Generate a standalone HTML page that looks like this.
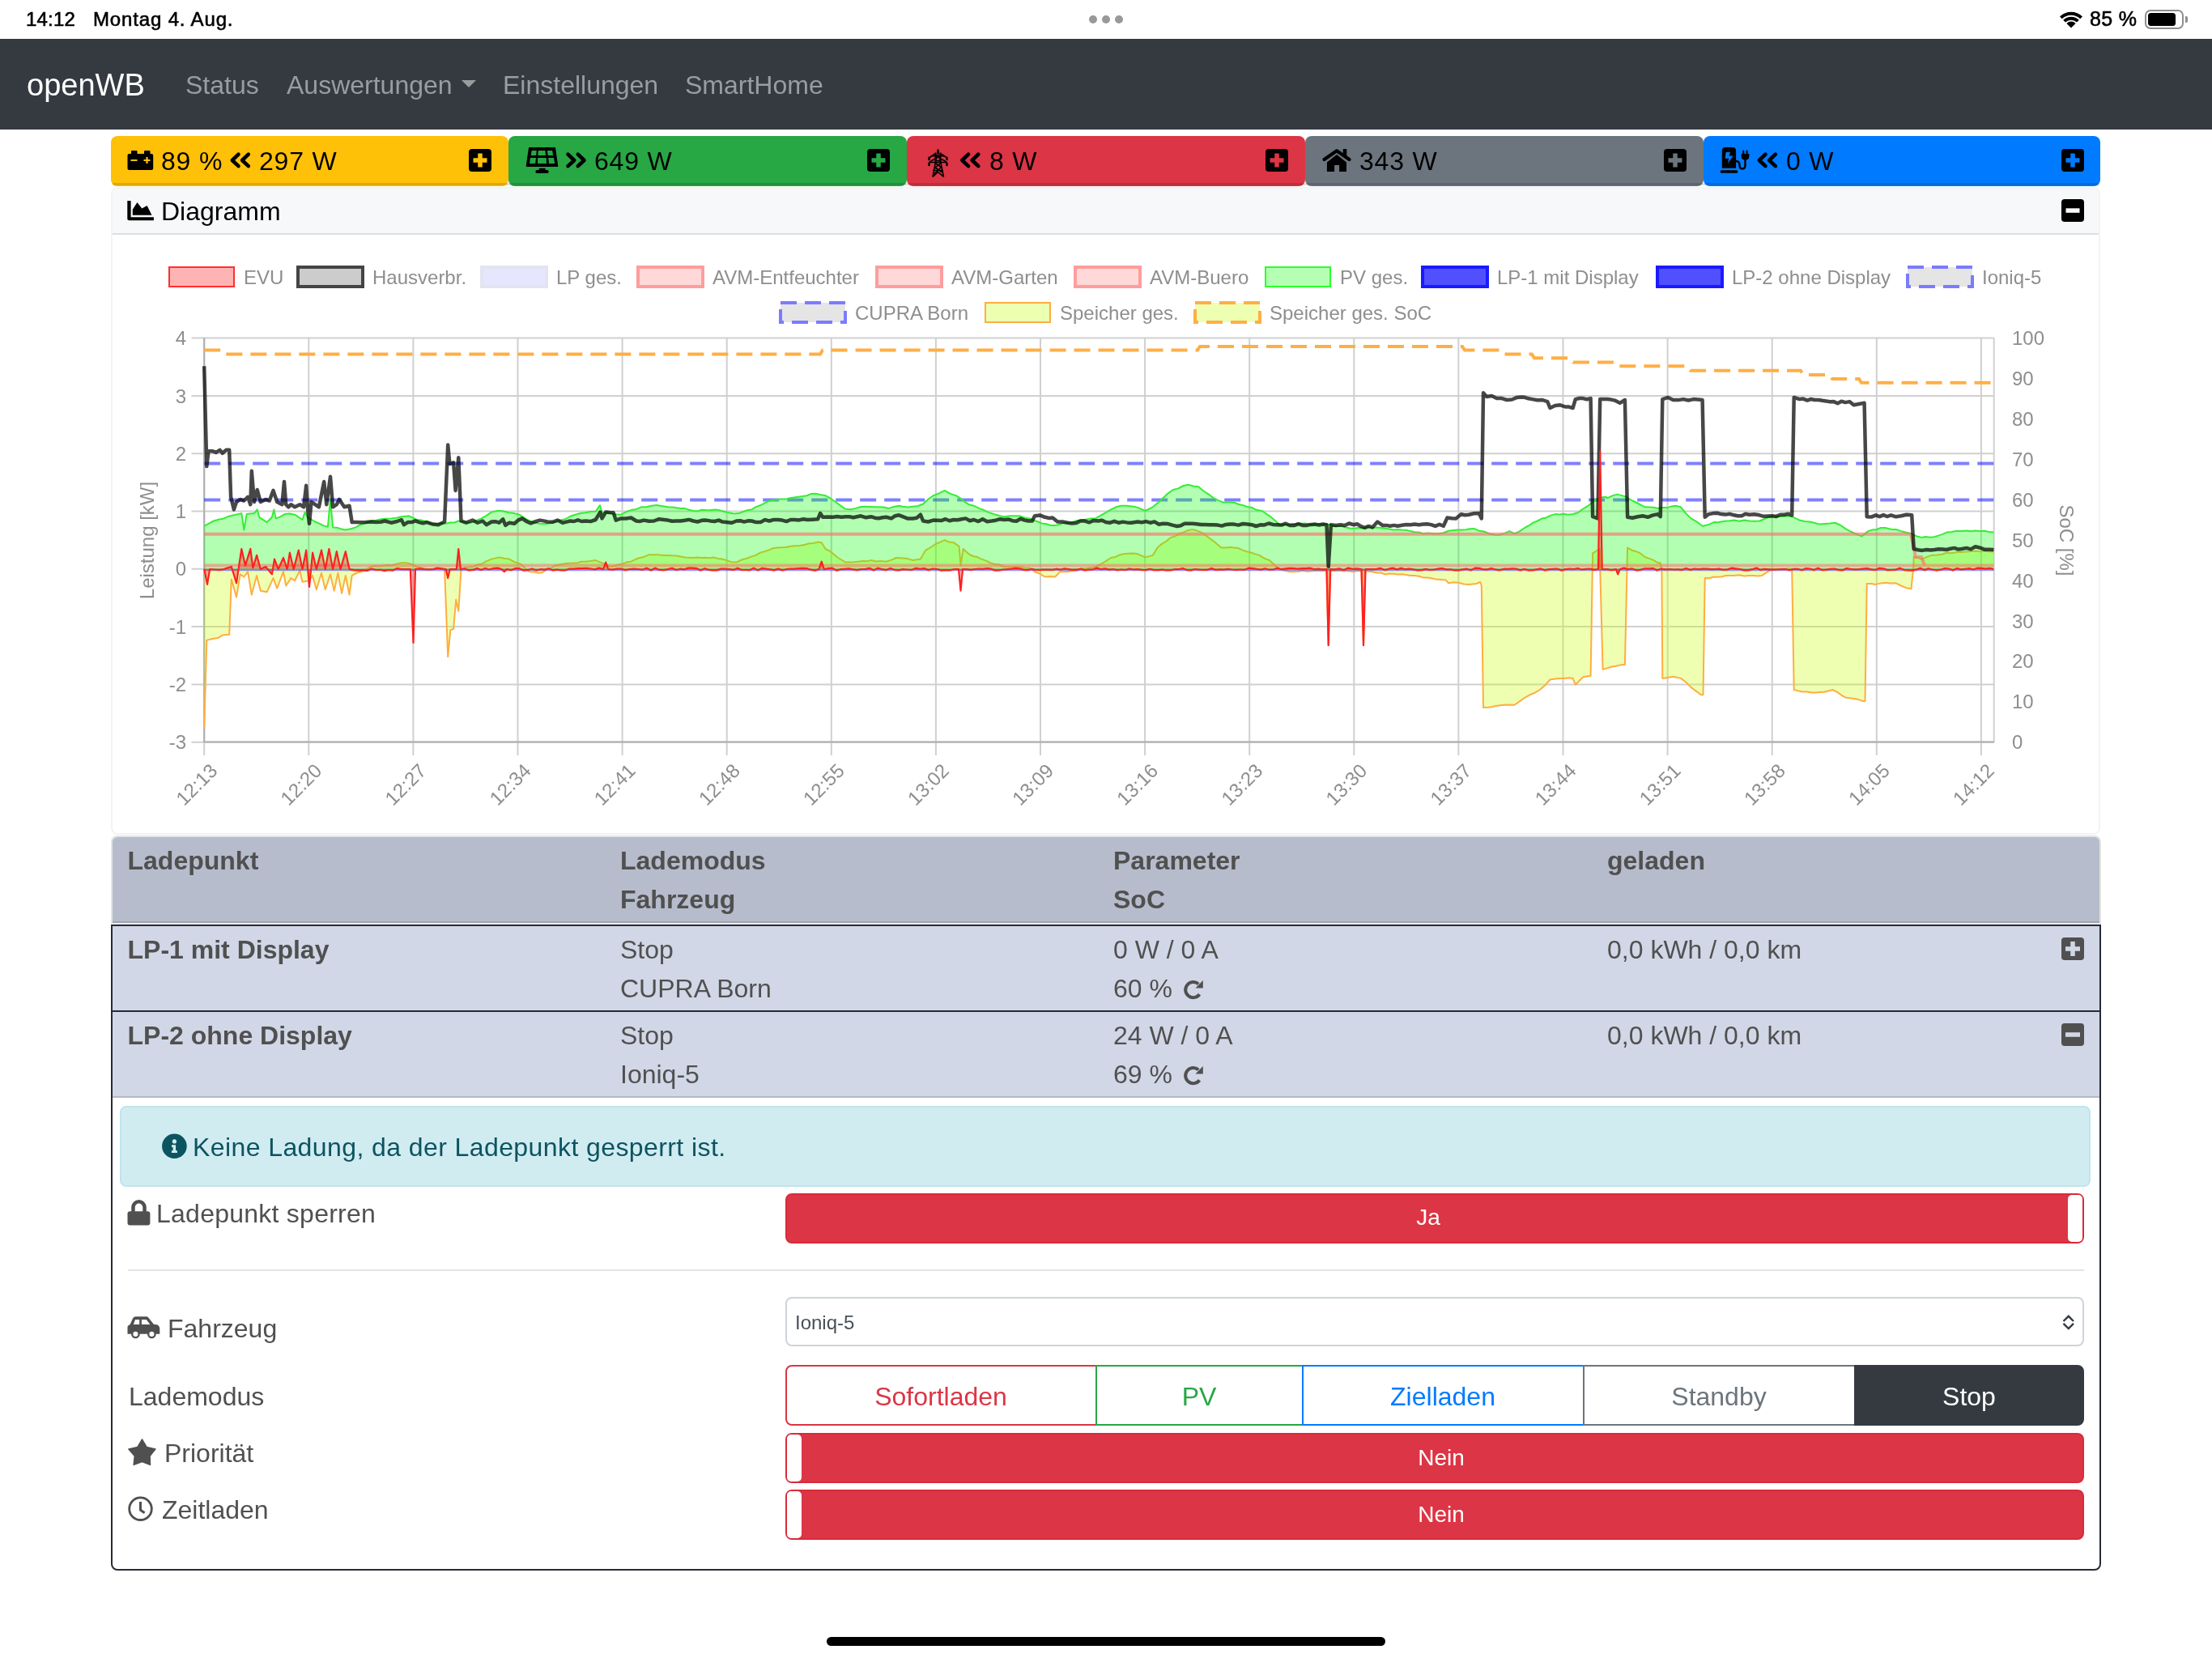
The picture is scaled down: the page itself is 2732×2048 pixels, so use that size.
<!DOCTYPE html>
<html><head><meta charset="utf-8">
<style>
*{box-sizing:border-box;margin:0;padding:0}
html,body{width:2732px;height:2048px;overflow:hidden;background:#fff;font-family:"Liberation Sans",sans-serif;position:relative}
body{will-change:transform}
.a{position:absolute}
.t{position:absolute;white-space:nowrap;line-height:1}
.f32{font-size:32px}
.f24{font-size:24px}
.f28{font-size:28px}
</style></head><body>

<!-- iOS status bar -->
<div class="t f24" style="left:32px;top:12px;color:#000;-webkit-text-stroke:0.6px #000;letter-spacing:0.2px">14:12</div>
<div class="t f24" style="left:115px;top:12px;color:#000;-webkit-text-stroke:0.6px #000;letter-spacing:0.85px">Montag 4. Aug.</div>
<div class="a" style="left:1345px;top:19px;width:10px;height:10px;border-radius:5px;background:#999"></div>
<div class="a" style="left:1361px;top:19px;width:10px;height:10px;border-radius:5px;background:#999"></div>
<div class="a" style="left:1377px;top:19px;width:10px;height:10px;border-radius:5px;background:#999"></div>
<svg class="a" style="left:2543px;top:13px" width="30" height="22" viewBox="0 0 30 22">
 <path d="M1 7.5 A20 20 0 0 1 29 7.5 L26.2 10.3 A16 16 0 0 0 3.8 10.3 Z" fill="#000"/>
 <path d="M5.2 11.7 A14 14 0 0 1 24.8 11.7 L22 14.5 A10 10 0 0 0 8 14.5 Z" fill="#000"/>
 <path d="M9.4 15.9 A8 8 0 0 1 20.6 15.9 L15 21.5 Z" fill="#000"/>
</svg>
<div class="t" style="left:2581px;top:11px;font-size:25px;color:#000;-webkit-text-stroke:0.6px #000;letter-spacing:0.3px">85 %</div>
<div class="a" style="left:2649px;top:12px;width:48px;height:24px;border:2.5px solid #8e8e8e;border-radius:7px"></div>
<div class="a" style="left:2653px;top:16px;width:34px;height:16px;background:#000;border-radius:3.5px"></div>
<div class="a" style="left:2699px;top:20px;width:3px;height:8px;background:#8e8e8e;border-radius:0 2px 2px 0"></div>

<!-- navbar -->
<div class="a" style="left:0;top:48px;width:2732px;height:112px;background:#343a40"></div>
<div class="t" style="left:33px;top:86px;font-size:38px;color:#fff">openWB</div>
<div class="t f32" style="left:229px;top:89px;color:#9a9da0">Status</div>
<div class="t f32" style="left:354px;top:89px;color:#9a9da0">Auswertungen</div>
<div class="a" style="left:570px;top:99px;width:0;height:0;border-left:9px solid transparent;border-right:9px solid transparent;border-top:9px solid #9a9da0"></div>
<div class="t f32" style="left:621px;top:89px;color:#9a9da0">Einstellungen</div>
<div class="t f32" style="left:846px;top:89px;color:#9a9da0">SmartHome</div>

<!-- cards -->
<div class="a" style="left:137px;top:168px;width:491px;height:62px;background:#ffc107;border-radius:8px;"></div>
<div class="a" style="left:628px;top:168px;width:492px;height:62px;background:#28a745;border-radius:8px;"></div>
<div class="a" style="left:1120px;top:168px;width:492px;height:62px;background:#dc3545;border-radius:8px;"></div>
<div class="a" style="left:1612px;top:168px;width:492px;height:62px;background:#6c757d;border-radius:8px;"></div>
<div class="a" style="left:2104px;top:168px;width:490px;height:62px;background:#007bff;border-radius:8px;"></div>
<div class="a" style="left:139px;top:226px;width:2453px;height:2.5px;background:rgba(0,0,0,.13)"></div>
<div class="t f32" style="left:199px;top:183px;color:#000;letter-spacing:0.8px">89 %</div>
<div class="t f32" style="left:320px;top:183px;color:#000;letter-spacing:0.8px">297 W</div>
<div class="t f32" style="left:734px;top:183px;color:#000;letter-spacing:0.8px">649 W</div>
<div class="t f32" style="left:1222px;top:183px;color:#000;letter-spacing:0.8px">8 W</div>
<div class="t f32" style="left:1679px;top:183px;color:#000;letter-spacing:0.8px">343 W</div>
<div class="t f32" style="left:2206px;top:183px;color:#000;letter-spacing:0.8px">0 W</div>
<svg class="a" style="left:0;top:0" width="2732" height="240" viewBox="0 0 2732 240">
 <defs>
  <g id="chl"><path d="M10 2.7 L2.3 10 L10 17.1 M22.3 2.7 L14.6 10 L22.3 17.1" fill="none" stroke="#000" stroke-width="4.6" stroke-linecap="round" stroke-linejoin="round"/></g>
  <g id="chr"><path d="M2.5 2.7 L10.2 10 L2.5 17.1 M14.8 2.7 L22.5 10 L14.8 17.1" fill="none" stroke="#000" stroke-width="4.6" stroke-linecap="round" stroke-linejoin="round"/></g>
 </defs>
 <!-- plus boxes -->
 <rect x="579" y="184" width="28" height="28" rx="4" fill="#000"/><path d="M593 189.5v17M584.5 198h17" stroke="#ffc107" stroke-width="5.5"/>
 <rect x="1071" y="184" width="28" height="28" rx="4" fill="#000"/><path d="M1085 189.5v17M1076.5 198h17" stroke="#28a745" stroke-width="5.5"/>
 <rect x="1563" y="184" width="28" height="28" rx="4" fill="#000"/><path d="M1577 189.5v17M1568.5 198h17" stroke="#dc3545" stroke-width="5.5"/>
 <rect x="2055" y="184" width="28" height="28" rx="4" fill="#000"/><path d="M2069 189.5v17M2060.5 198h17" stroke="#6c757d" stroke-width="5.5"/>
 <rect x="2546" y="184" width="28" height="28" rx="4" fill="#000"/><path d="M2560 189.5v17M2551.5 198h17" stroke="#007bff" stroke-width="5.5"/>
 <!-- battery -->
 <rect x="162" y="186" width="7.5" height="6" rx="1" fill="#000"/>
 <rect x="178" y="186" width="7.5" height="6" rx="1" fill="#000"/>
 <rect x="157.5" y="190" width="31.7" height="20" rx="2" fill="#000"/>
 <path d="M161.5 198h8M177.5 198h8M181.5 194v8" stroke="#ffc107" stroke-width="2.2"/>
 <use href="#chl" x="284.5" y="188"/>
 <!-- solar -->
 <path d="M653.6 182 L685.4 182 Q686 182 686.1 183 L689.3 205 Q689.4 206 688.3 206 L650.7 206 Q649.6 206 649.7 205 L652.9 183 Q653 182 653.6 182Z" fill="#000"/>
 <path d="M656.7 185.9h6.1l-0.6 6.2h-6.5zM664.9 185.9h8.5l0.6 6.2h-9.7zM676 185.9h6.2l0.9 6.2h-6.4zM655 194.9h7l-0.8 7.2h-7.2zM664.1 194.9h10.6l0.3 7.2h-11zM677.3 194.9h6.7l1.2 7.2h-7.2z" fill="#28a745"/>
 <rect x="665.8" y="207.8" width="7.7" height="3" fill="#000"/>
 <rect x="661.5" y="210" width="16" height="4" rx="1.5" fill="#000"/>
 <use href="#chr" x="699" y="188"/>
 <!-- tower -->
 <g fill="none" stroke="#000" stroke-width="1.6" stroke-linejoin="round">
  <path d="M1158.5 184.5 L1152 218.3 M1158.5 184.5 L1165.5 218.3"/>
  <path d="M1155.3 188.5v13M1161.7 188.5v13"/>
  <path d="M1147.5 195.5 Q1152 191 1155.3 190 M1169.5 195.5 Q1165 191 1161.7 190"/>
  <path d="M1147.5 201 Q1150 197.8 1155.3 196.5 M1169.5 201 Q1167 197.8 1161.7 196.5"/>
  <path d="M1148 200.5h21 M1150 192.8h17 M1155.3 194.5h6.4 M1155.3 198.5h6.4"/>
  <path d="M1155.3 201.5 L1162.5 206.5 L1153.5 215 M1161.7 201.5 L1155 207 L1164 213"/>
  <path d="M1152.2 210.5h12.6 M1152 218.3 L1158.5 212.5 L1165.5 218.3"/>
 </g>
 <g fill="#000"><rect x="1146.3" y="193.5" width="2.4" height="4.8" rx="1"/><rect x="1168.3" y="193.5" width="2.4" height="4.8" rx="1"/>
 <rect x="1146.3" y="200.5" width="2.4" height="4.8" rx="1"/><rect x="1168.3" y="200.5" width="2.4" height="4.8" rx="1"/></g>
 <use href="#chl" x="1186" y="188"/>
 <!-- home -->
 <path d="M1635.5 197 L1651 186.3 L1666.5 197" fill="none" stroke="#000" stroke-width="4.2" stroke-linecap="round" stroke-linejoin="round"/>
 <rect x="1658.8" y="184" width="4.5" height="9" fill="#000"/>
 <path d="M1651 191.1 L1663 200.5 V211.9 H1654.1 V203.9 H1648.1 V211.9 H1638.9 V200.5 Z" fill="#000"/>
 <!-- charging station -->
 <path d="M2126.8 207.8 V186.5 Q2126.8 182.1 2131 182.1 H2140 Q2144.1 182.1 2144.1 186.5 V207.8 Z" fill="#000"/>
 <path d="M2131.7 188 H2137 L2135.5 192.5 H2140.6 L2134 202 L2135.2 195.8 H2130.6 Z" fill="#007bff"/>
 <rect x="2124.6" y="210.2" width="21.7" height="3.5" rx="1.5" fill="#000"/>
 <path d="M2144 199 Q2148.5 199 2148.5 204 Q2148.5 208.5 2152 208.5 Q2155.5 208.5 2155.5 204 V196" fill="none" stroke="#000" stroke-width="2.4"/>
 <path d="M2150.6 190 H2160.4 V193 Q2160.4 197.5 2155.5 197.5 Q2150.6 197.5 2150.6 193 Z" fill="#000"/>
 <path d="M2153.3 186.5v4M2157.6 186.5v4" stroke="#000" stroke-width="2" stroke-linecap="round"/>
 <use href="#chl" x="2170.5" y="188"/>
</svg>

<!-- SECTION:CARDS -->

<!-- DIAGRAM_START -->
<div class="a" style="left:137px;top:231px;width:2457px;height:800px;border:2px solid #f2f3f5;border-radius:8px;background:#fff"></div>
<div class="a" style="left:139px;top:233px;width:2453px;height:57px;background:#f7f8fa;border-bottom:2px solid #dcdfe1;border-radius:6px 6px 0 0"></div>
<svg class="a" style="left:157px;top:248px" width="33" height="25" viewBox="0 0 33 25"><path d="M0.3 0 h4.3 v20.3 h28.3 v4 H2.3 Q0.3 24.3 0.3 22.3Z" fill="#000"/><path d="M6.8 17.7 V10.7 L12.5 2 L18.3 9.6 L24.6 6 L30.5 17.7Z" fill="#000"/></svg>
<div class="t f32" style="left:199px;top:245px;color:#000">Diagramm</div>
<svg class="a" style="left:2546px;top:246px" width="28" height="28"><rect width="28" height="28" rx="4" fill="#000"/><rect x="5.5" y="11.3" width="17" height="5.5" fill="#f7f8fa"/></svg>
<svg class="a" style="left:0;top:0" width="2732" height="1040" viewBox="0 0 2732 1040">
<path d="M236.5 417.6H2462.7 M236.5 488.9H2462.7 M236.5 560.2H2462.7 M236.5 631.5H2462.7 M236.5 702.8H2462.7 M236.5 774.1H2462.7 M236.5 845.4H2462.7 M236.5 916.7H2462.7 M252.2 417.6V933 M381.3 417.6V933 M510.4 417.6V933 M639.5 417.6V933 M768.6 417.6V933 M897.7 417.6V933 M1026.8 417.6V933 M1155.9 417.6V933 M1285.0 417.6V933 M1414.1 417.6V933 M1543.2 417.6V933 M1672.3 417.6V933 M1801.4 417.6V933 M1930.5 417.6V933 M2059.6 417.6V933 M2188.7 417.6V933 M2317.8 417.6V933 M2446.9 417.6V933 M2462.7 417.6V917.5" stroke="#d0d0d0" stroke-width="2" fill="none"/>
<path d="M252.2 417.6V917.5 M252.2 916.5H2462.7" stroke="#adadad" stroke-width="2" fill="none"/>
<g font-family="Liberation Sans" font-size="24" fill="#8e8e8e"><text x="230" y="426.2" text-anchor="end">4</text><text x="230" y="497.5" text-anchor="end">3</text><text x="230" y="568.8" text-anchor="end">2</text><text x="230" y="640.1" text-anchor="end">1</text><text x="230" y="711.4" text-anchor="end">0</text><text x="230" y="782.7" text-anchor="end">-1</text><text x="230" y="854.0" text-anchor="end">-2</text><text x="230" y="925.3" text-anchor="end">-3</text><text x="2485" y="426.2">100</text><text x="2485" y="476.1">90</text><text x="2485" y="526.0">80</text><text x="2485" y="575.9">70</text><text x="2485" y="625.8">60</text><text x="2485" y="675.7">50</text><text x="2485" y="725.6">40</text><text x="2485" y="775.5">30</text><text x="2485" y="825.4">20</text><text x="2485" y="875.3">10</text><text x="2485" y="925.2">0</text><text transform="translate(264.2 948) rotate(-45)" text-anchor="end" x="0" y="8">12:13</text><text transform="translate(393.3 948) rotate(-45)" text-anchor="end" x="0" y="8">12:20</text><text transform="translate(522.4 948) rotate(-45)" text-anchor="end" x="0" y="8">12:27</text><text transform="translate(651.5 948) rotate(-45)" text-anchor="end" x="0" y="8">12:34</text><text transform="translate(780.6 948) rotate(-45)" text-anchor="end" x="0" y="8">12:41</text><text transform="translate(909.7 948) rotate(-45)" text-anchor="end" x="0" y="8">12:48</text><text transform="translate(1038.8 948) rotate(-45)" text-anchor="end" x="0" y="8">12:55</text><text transform="translate(1167.9 948) rotate(-45)" text-anchor="end" x="0" y="8">13:02</text><text transform="translate(1297.0 948) rotate(-45)" text-anchor="end" x="0" y="8">13:09</text><text transform="translate(1426.1 948) rotate(-45)" text-anchor="end" x="0" y="8">13:16</text><text transform="translate(1555.2 948) rotate(-45)" text-anchor="end" x="0" y="8">13:23</text><text transform="translate(1684.3 948) rotate(-45)" text-anchor="end" x="0" y="8">13:30</text><text transform="translate(1813.4 948) rotate(-45)" text-anchor="end" x="0" y="8">13:37</text><text transform="translate(1942.5 948) rotate(-45)" text-anchor="end" x="0" y="8">13:44</text><text transform="translate(2071.6 948) rotate(-45)" text-anchor="end" x="0" y="8">13:51</text><text transform="translate(2200.7 948) rotate(-45)" text-anchor="end" x="0" y="8">13:58</text><text transform="translate(2329.8 948) rotate(-45)" text-anchor="end" x="0" y="8">14:05</text><text transform="translate(2458.9 948) rotate(-45)" text-anchor="end" x="0" y="8">14:12</text><text transform="translate(190 667.5) rotate(-90)" text-anchor="middle">Leistung [kW]</text><text transform="translate(2544 667.5) rotate(90)" text-anchor="middle">SoC [%]</text></g>
<path d="M252.2 432.6 L273.0 432.6 L276.0 437.6 L1013.0 437.6 L1016.0 432.6 L1479.0 432.6 L1482.0 427.9 L1806.0 427.9 L1809.0 432.6 L1852.0 432.6 L1855.0 437.6 L1892.0 437.6 L1895.0 442.3 L1940.0 442.3 L1943.0 447.6 L1995.0 447.6 L1998.0 452.3 L2085.0 452.3 L2088.0 457.8 L2224.0 457.8 L2227.0 463.0 L2260.0 463.0 L2263.0 468.0 L2296.0 468.0 L2299.0 472.8 L2462.5 472.8" stroke="#ffae45" stroke-width="4" fill="none" stroke-dasharray="20 10"/>
<path d="M252.2 702.8 L252.2 899.0 L255.3 790.9 L262.7 789.0 L270.1 787.7 L274.8 784.6 L283.2 783.7 L285.8 715.6 L292.0 737.6 L296.7 709.4 L301.4 712.5 L306.1 706.2 L310.8 734.5 L317.1 710.9 L321.8 729.7 L329.6 731.3 L337.5 714.1 L342.2 726.6 L350.0 706.2 L353.2 723.5 L359.4 714.1 L364.1 717.2 L370.4 704.7 L373.5 718.8 L382.0 717.2 L386.1 710.9 L390.8 728.2 L397.0 707.8 L401.7 728.2 L408.0 709.4 L412.7 729.7 L417.4 707.8 L422.1 732.9 L426.8 710.9 L431.5 734.5 L434.7 710.9 L440.1 708.0 L445.6 706.2 L451.9 703.4 L458.2 700.0 L463.2 698.9 L468.2 699.4 L473.2 698.8 L478.2 697.9 L483.2 698.4 L489.5 696.8 L495.8 695.3 L502.1 695.2 L508.3 696.8 L514.6 700.0 L520.9 701.4 L527.1 703.1 L535.0 703.1 L542.1 702.3 L549.1 703.1 L553.2 811.3 L556.3 778.3 L560.1 776.8 L563.2 740.7 L566.3 754.8 L569.5 703.1 L574.5 701.1 L579.5 700.5 L584.5 699.9 L589.5 697.4 L594.6 696.8 L600.8 693.2 L607.1 690.6 L616.5 688.4 L622.8 689.7 L629.0 690.6 L636.1 694.5 L643.2 696.8 L648.6 701.7 L654.1 706.2 L659.3 706.4 L664.6 707.7 L669.8 707.2 L675.0 703.4 L680.2 702.0 L685.5 698.4 L690.8 697.4 L696.2 696.4 L701.6 695.7 L707.0 695.4 L712.3 695.6 L717.7 693.8 L723.1 693.7 L729.4 693.1 L735.6 692.1 L745.0 695.9 L754.4 700.0 L759.5 699.0 L764.5 697.2 L769.5 696.3 L774.5 694.2 L779.5 693.7 L785.0 690.8 L790.5 688.9 L796.0 687.7 L801.5 685.2 L807.3 685.3 L813.2 685.2 L819.1 685.9 L825.0 685.9 L830.2 686.3 L835.4 686.5 L840.7 687.4 L845.9 688.5 L851.1 688.8 L856.3 689.0 L861.4 688.4 L866.4 688.9 L871.4 688.7 L876.4 689.2 L881.4 688.4 L886.7 690.0 L891.9 690.5 L897.1 692.1 L903.4 694.2 L909.6 694.6 L915.9 691.5 L922.2 689.7 L928.4 687.4 L933.7 685.8 L938.9 682.6 L944.1 681.2 L949.3 679.6 L954.6 677.2 L959.8 676.5 L965.0 676.2 L970.2 675.9 L975.5 674.9 L981.7 674.3 L988.0 674.1 L994.3 672.7 L999.5 671.3 L1004.7 671.0 L1010.0 669.6 L1014.7 670.2 L1019.4 678.0 L1025.6 681.2 L1035.0 689.0 L1044.4 694.6 L1049.7 694.5 L1054.9 694.2 L1060.1 693.7 L1065.3 693.1 L1070.6 693.3 L1075.8 692.1 L1082.1 693.5 L1088.3 693.1 L1094.6 693.7 L1100.9 691.6 L1107.1 689.0 L1115.0 689.6 L1121.3 690.1 L1127.5 692.1 L1136.9 690.6 L1143.2 679.6 L1149.5 676.0 L1155.8 671.8 L1161.2 669.7 L1166.7 667.1 L1172.2 669.5 L1177.7 670.2 L1184.6 674.9 L1186.5 698.4 L1189.6 678.0 L1196.5 684.3 L1201.7 687.0 L1207.0 688.1 L1212.2 690.6 L1217.4 692.4 L1222.6 695.0 L1227.9 696.8 L1234.1 697.5 L1240.4 700.0 L1245.6 700.2 L1250.8 699.9 L1256.1 700.1 L1261.3 700.2 L1266.5 701.8 L1271.7 701.5 L1278.0 706.2 L1284.3 708.7 L1290.5 712.5 L1296.8 712.1 L1303.1 712.5 L1309.4 706.2 L1318.8 706.2 L1324.5 705.0 L1330.3 704.8 L1336.0 702.3 L1341.8 702.0 L1347.5 701.1 L1353.2 700.0 L1359.5 697.0 L1365.8 693.2 L1372.1 689.0 L1377.3 688.1 L1382.5 685.5 L1387.7 684.3 L1394.0 683.7 L1400.3 683.4 L1405.0 684.3 L1414.4 688.4 L1423.8 685.9 L1430.1 675.8 L1435.3 671.6 L1440.5 668.6 L1445.8 663.9 L1451.0 662.7 L1456.2 659.1 L1461.4 657.6 L1466.9 655.2 L1472.4 653.9 L1477.9 655.3 L1483.4 657.6 L1488.6 660.8 L1493.8 664.9 L1499.0 668.6 L1508.4 676.5 L1513.7 676.6 L1518.9 676.0 L1524.1 676.5 L1529.3 677.1 L1534.6 679.4 L1539.8 681.2 L1545.0 682.5 L1550.2 684.4 L1555.5 685.9 L1561.7 689.8 L1568.0 692.1 L1574.3 698.0 L1580.5 703.1 L1586.8 704.7 L1593.1 706.2 L1598.3 706.2 L1603.5 706.0 L1608.8 704.7 L1614.0 705.9 L1619.2 705.4 L1624.4 704.7 L1631.5 705.3 L1638.5 704.7 L1640.7 797.1 L1642.9 704.7 L1649.4 705.2 L1655.8 704.7 L1661.0 705.0 L1666.2 705.5 L1671.5 706.2 L1676.5 705.1 L1681.5 705.3 L1684.0 797.1 L1686.2 705.3 L1695.0 706.2 L1700.2 707.5 L1705.4 707.5 L1710.7 709.4 L1715.9 708.6 L1721.1 708.8 L1726.3 709.4 L1731.6 709.3 L1736.8 710.1 L1742.0 710.9 L1747.2 711.0 L1752.5 711.7 L1757.7 713.4 L1762.9 713.6 L1768.1 714.2 L1773.4 715.6 L1779.6 715.9 L1785.9 716.6 L1789.0 720.3 L1795.3 719.2 L1801.6 719.7 L1807.9 721.5 L1814.1 721.9 L1823.5 721.0 L1828.2 718.8 L1829.8 723.5 L1832.0 873.9 L1837.2 873.8 L1842.3 873.3 L1847.6 871.9 L1852.8 871.2 L1858.0 870.8 L1864.3 870.5 L1870.5 870.8 L1876.8 866.4 L1883.1 861.8 L1889.4 858.3 L1895.6 855.8 L1901.9 852.0 L1908.2 846.6 L1914.4 839.5 L1920.7 838.6 L1927.0 837.9 L1932.2 837.9 L1937.4 837.2 L1942.6 837.9 L1945.8 845.7 L1955.2 836.3 L1964.6 834.8 L1967.1 683.4 L1975.6 678.0 L1979.6 826.9 L1985.0 825.4 L1990.5 823.5 L1996.0 822.7 L2001.5 821.4 L2006.9 820.7 L2009.5 703.1 L2010.1 676.5 L2015.5 679.7 L2020.8 681.2 L2026.2 683.7 L2031.6 688.0 L2036.9 689.9 L2042.3 691.9 L2047.7 695.3 L2050.8 695.3 L2052.4 704.7 L2053.3 837.9 L2059.9 836.9 L2066.5 835.7 L2075.9 837.9 L2082.2 842.5 L2088.4 848.9 L2094.7 853.6 L2101.0 858.3 L2103.5 858.3 L2105.7 714.1 L2111.2 714.2 L2116.7 712.5 L2121.7 712.8 L2126.7 712.2 L2131.7 711.1 L2136.7 711.0 L2141.7 710.9 L2148.0 710.3 L2154.3 711.4 L2160.5 710.9 L2165.8 711.0 L2171.0 711.4 L2176.2 710.9 L2185.6 704.7 L2188.8 703.1 L2194.4 702.8 L2200.0 703.1 L2206.6 702.6 L2213.2 703.1 L2215.7 852.0 L2221.2 853.4 L2226.6 854.6 L2232.0 854.5 L2237.2 855.4 L2242.5 855.5 L2247.7 855.1 L2252.9 854.7 L2258.1 853.5 L2263.4 852.0 L2268.6 854.6 L2273.8 858.3 L2279.0 861.4 L2284.5 862.3 L2290.0 862.9 L2295.5 864.1 L2301.0 866.1 L2303.5 866.1 L2305.7 721.0 L2311.2 721.0 L2316.7 721.9 L2322.9 720.4 L2329.2 719.7 L2335.5 720.4 L2341.7 720.3 L2348.0 723.5 L2354.3 726.2 L2360.5 727.2 L2363.1 703.1 L2363.7 687.4 L2373.1 690.6 L2379.4 688.1 L2385.6 685.9 L2391.9 685.6 L2398.2 684.7 L2404.4 682.7 L2410.7 683.3 L2417.0 682.1 L2423.2 682.1 L2428.7 681.4 L2434.2 681.1 L2439.7 680.8 L2445.2 681.2 L2450.9 680.6 L2456.7 681.4 L2462.4 681.2 L2462.4 702.8 Z" fill="rgba(200,255,0,0.3)" stroke="none"/>
<path d="M252.2 899.0 L255.3 790.9 L262.7 789.0 L270.1 787.7 L274.8 784.6 L283.2 783.7 L285.8 715.6 L292.0 737.6 L296.7 709.4 L301.4 712.5 L306.1 706.2 L310.8 734.5 L317.1 710.9 L321.8 729.7 L329.6 731.3 L337.5 714.1 L342.2 726.6 L350.0 706.2 L353.2 723.5 L359.4 714.1 L364.1 717.2 L370.4 704.7 L373.5 718.8 L382.0 717.2 L386.1 710.9 L390.8 728.2 L397.0 707.8 L401.7 728.2 L408.0 709.4 L412.7 729.7 L417.4 707.8 L422.1 732.9 L426.8 710.9 L431.5 734.5 L434.7 710.9 L440.1 708.0 L445.6 706.2 L451.9 703.4 L458.2 700.0 L463.2 698.9 L468.2 699.4 L473.2 698.8 L478.2 697.9 L483.2 698.4 L489.5 696.8 L495.8 695.3 L502.1 695.2 L508.3 696.8 L514.6 700.0 L520.9 701.4 L527.1 703.1 L535.0 703.1 L542.1 702.3 L549.1 703.1 L553.2 811.3 L556.3 778.3 L560.1 776.8 L563.2 740.7 L566.3 754.8 L569.5 703.1 L574.5 701.1 L579.5 700.5 L584.5 699.9 L589.5 697.4 L594.6 696.8 L600.8 693.2 L607.1 690.6 L616.5 688.4 L622.8 689.7 L629.0 690.6 L636.1 694.5 L643.2 696.8 L648.6 701.7 L654.1 706.2 L659.3 706.4 L664.6 707.7 L669.8 707.2 L675.0 703.4 L680.2 702.0 L685.5 698.4 L690.8 697.4 L696.2 696.4 L701.6 695.7 L707.0 695.4 L712.3 695.6 L717.7 693.8 L723.1 693.7 L729.4 693.1 L735.6 692.1 L745.0 695.9 L754.4 700.0 L759.5 699.0 L764.5 697.2 L769.5 696.3 L774.5 694.2 L779.5 693.7 L785.0 690.8 L790.5 688.9 L796.0 687.7 L801.5 685.2 L807.3 685.3 L813.2 685.2 L819.1 685.9 L825.0 685.9 L830.2 686.3 L835.4 686.5 L840.7 687.4 L845.9 688.5 L851.1 688.8 L856.3 689.0 L861.4 688.4 L866.4 688.9 L871.4 688.7 L876.4 689.2 L881.4 688.4 L886.7 690.0 L891.9 690.5 L897.1 692.1 L903.4 694.2 L909.6 694.6 L915.9 691.5 L922.2 689.7 L928.4 687.4 L933.7 685.8 L938.9 682.6 L944.1 681.2 L949.3 679.6 L954.6 677.2 L959.8 676.5 L965.0 676.2 L970.2 675.9 L975.5 674.9 L981.7 674.3 L988.0 674.1 L994.3 672.7 L999.5 671.3 L1004.7 671.0 L1010.0 669.6 L1014.7 670.2 L1019.4 678.0 L1025.6 681.2 L1035.0 689.0 L1044.4 694.6 L1049.7 694.5 L1054.9 694.2 L1060.1 693.7 L1065.3 693.1 L1070.6 693.3 L1075.8 692.1 L1082.1 693.5 L1088.3 693.1 L1094.6 693.7 L1100.9 691.6 L1107.1 689.0 L1115.0 689.6 L1121.3 690.1 L1127.5 692.1 L1136.9 690.6 L1143.2 679.6 L1149.5 676.0 L1155.8 671.8 L1161.2 669.7 L1166.7 667.1 L1172.2 669.5 L1177.7 670.2 L1184.6 674.9 L1186.5 698.4 L1189.6 678.0 L1196.5 684.3 L1201.7 687.0 L1207.0 688.1 L1212.2 690.6 L1217.4 692.4 L1222.6 695.0 L1227.9 696.8 L1234.1 697.5 L1240.4 700.0 L1245.6 700.2 L1250.8 699.9 L1256.1 700.1 L1261.3 700.2 L1266.5 701.8 L1271.7 701.5 L1278.0 706.2 L1284.3 708.7 L1290.5 712.5 L1296.8 712.1 L1303.1 712.5 L1309.4 706.2 L1318.8 706.2 L1324.5 705.0 L1330.3 704.8 L1336.0 702.3 L1341.8 702.0 L1347.5 701.1 L1353.2 700.0 L1359.5 697.0 L1365.8 693.2 L1372.1 689.0 L1377.3 688.1 L1382.5 685.5 L1387.7 684.3 L1394.0 683.7 L1400.3 683.4 L1405.0 684.3 L1414.4 688.4 L1423.8 685.9 L1430.1 675.8 L1435.3 671.6 L1440.5 668.6 L1445.8 663.9 L1451.0 662.7 L1456.2 659.1 L1461.4 657.6 L1466.9 655.2 L1472.4 653.9 L1477.9 655.3 L1483.4 657.6 L1488.6 660.8 L1493.8 664.9 L1499.0 668.6 L1508.4 676.5 L1513.7 676.6 L1518.9 676.0 L1524.1 676.5 L1529.3 677.1 L1534.6 679.4 L1539.8 681.2 L1545.0 682.5 L1550.2 684.4 L1555.5 685.9 L1561.7 689.8 L1568.0 692.1 L1574.3 698.0 L1580.5 703.1 L1586.8 704.7 L1593.1 706.2 L1598.3 706.2 L1603.5 706.0 L1608.8 704.7 L1614.0 705.9 L1619.2 705.4 L1624.4 704.7 L1631.5 705.3 L1638.5 704.7 L1640.7 797.1 L1642.9 704.7 L1649.4 705.2 L1655.8 704.7 L1661.0 705.0 L1666.2 705.5 L1671.5 706.2 L1676.5 705.1 L1681.5 705.3 L1684.0 797.1 L1686.2 705.3 L1695.0 706.2 L1700.2 707.5 L1705.4 707.5 L1710.7 709.4 L1715.9 708.6 L1721.1 708.8 L1726.3 709.4 L1731.6 709.3 L1736.8 710.1 L1742.0 710.9 L1747.2 711.0 L1752.5 711.7 L1757.7 713.4 L1762.9 713.6 L1768.1 714.2 L1773.4 715.6 L1779.6 715.9 L1785.9 716.6 L1789.0 720.3 L1795.3 719.2 L1801.6 719.7 L1807.9 721.5 L1814.1 721.9 L1823.5 721.0 L1828.2 718.8 L1829.8 723.5 L1832.0 873.9 L1837.2 873.8 L1842.3 873.3 L1847.6 871.9 L1852.8 871.2 L1858.0 870.8 L1864.3 870.5 L1870.5 870.8 L1876.8 866.4 L1883.1 861.8 L1889.4 858.3 L1895.6 855.8 L1901.9 852.0 L1908.2 846.6 L1914.4 839.5 L1920.7 838.6 L1927.0 837.9 L1932.2 837.9 L1937.4 837.2 L1942.6 837.9 L1945.8 845.7 L1955.2 836.3 L1964.6 834.8 L1967.1 683.4 L1975.6 678.0 L1979.6 826.9 L1985.0 825.4 L1990.5 823.5 L1996.0 822.7 L2001.5 821.4 L2006.9 820.7 L2009.5 703.1 L2010.1 676.5 L2015.5 679.7 L2020.8 681.2 L2026.2 683.7 L2031.6 688.0 L2036.9 689.9 L2042.3 691.9 L2047.7 695.3 L2050.8 695.3 L2052.4 704.7 L2053.3 837.9 L2059.9 836.9 L2066.5 835.7 L2075.9 837.9 L2082.2 842.5 L2088.4 848.9 L2094.7 853.6 L2101.0 858.3 L2103.5 858.3 L2105.7 714.1 L2111.2 714.2 L2116.7 712.5 L2121.7 712.8 L2126.7 712.2 L2131.7 711.1 L2136.7 711.0 L2141.7 710.9 L2148.0 710.3 L2154.3 711.4 L2160.5 710.9 L2165.8 711.0 L2171.0 711.4 L2176.2 710.9 L2185.6 704.7 L2188.8 703.1 L2194.4 702.8 L2200.0 703.1 L2206.6 702.6 L2213.2 703.1 L2215.7 852.0 L2221.2 853.4 L2226.6 854.6 L2232.0 854.5 L2237.2 855.4 L2242.5 855.5 L2247.7 855.1 L2252.9 854.7 L2258.1 853.5 L2263.4 852.0 L2268.6 854.6 L2273.8 858.3 L2279.0 861.4 L2284.5 862.3 L2290.0 862.9 L2295.5 864.1 L2301.0 866.1 L2303.5 866.1 L2305.7 721.0 L2311.2 721.0 L2316.7 721.9 L2322.9 720.4 L2329.2 719.7 L2335.5 720.4 L2341.7 720.3 L2348.0 723.5 L2354.3 726.2 L2360.5 727.2 L2363.1 703.1 L2363.7 687.4 L2373.1 690.6 L2379.4 688.1 L2385.6 685.9 L2391.9 685.6 L2398.2 684.7 L2404.4 682.7 L2410.7 683.3 L2417.0 682.1 L2423.2 682.1 L2428.7 681.4 L2434.2 681.1 L2439.7 680.8 L2445.2 681.2 L2450.9 680.6 L2456.7 681.4 L2462.4 681.2" fill="none" stroke="#ffae3f" stroke-width="2" stroke-linejoin="round"/>
<path d="M252.2 572.5H2462.5 M252.2 617.6H2462.5" stroke="rgba(0,0,255,0.5)" stroke-width="4" stroke-dasharray="20 10" fill="none"/>
<path d="M252.2 704H2462.5" stroke="rgba(60,60,255,0.55)" stroke-width="2.5" fill="none"/>
<path d="M252.2 702.8 L252.2 649.8 L258.0 646.6 L263.8 643.5 L270.1 641.7 L276.3 640.4 L282.6 637.7 L288.9 636.3 L298.3 634.1 L301.4 654.5 L304.6 635.1 L314.0 634.1 L317.7 629.4 L320.2 638.8 L329.6 645.1 L335.9 638.8 L338.4 629.4 L340.6 640.4 L346.1 638.4 L351.6 635.1 L357.9 634.5 L364.1 635.7 L373.5 642.0 L376.7 632.6 L379.8 638.8 L389.2 644.5 L394.4 646.6 L399.6 649.4 L404.9 650.8 L408.0 616.9 L411.1 651.4 L416.4 651.7 L421.6 653.6 L426.8 654.5 L433.1 653.2 L439.4 651.4 L445.6 647.9 L451.9 645.9 L458.2 643.5 L464.4 642.8 L470.7 641.3 L477.0 640.8 L483.2 640.4 L489.5 639.7 L495.8 638.2 L505.2 637.3 L514.6 642.0 L520.9 642.6 L527.1 644.5 L535.0 647.6 L540.2 646.8 L545.4 646.3 L550.7 646.7 L555.9 645.6 L561.1 645.4 L566.3 643.5 L571.6 644.4 L576.8 645.5 L582.0 645.7 L588.3 642.9 L594.6 640.4 L600.8 636.9 L607.1 632.6 L613.4 631.1 L619.6 631.0 L629.0 633.2 L635.3 634.1 L641.6 635.7 L651.0 642.0 L660.4 645.7 L666.7 646.8 L672.9 647.3 L679.2 646.3 L685.5 644.5 L691.7 642.8 L698.0 641.3 L704.3 637.8 L710.5 635.7 L716.8 634.0 L723.1 633.2 L729.4 632.0 L735.6 631.9 L741.0 624.1 L743.5 633.2 L748.9 633.3 L754.4 634.1 L760.7 635.5 L767.0 635.7 L773.2 632.3 L779.5 630.1 L785.8 628.9 L792.1 626.3 L798.3 626.2 L804.6 624.7 L810.9 624.1 L817.1 625.0 L825.0 626.3 L830.2 626.6 L835.4 627.3 L840.7 627.9 L845.9 628.1 L851.1 629.8 L856.3 631.0 L861.6 631.4 L866.8 629.7 L872.0 630.1 L877.2 630.2 L882.5 629.4 L887.7 630.1 L894.0 631.8 L900.2 633.2 L906.5 634.4 L912.8 634.1 L918.0 632.0 L923.2 630.1 L928.4 629.4 L933.7 626.1 L938.9 624.3 L944.1 621.6 L949.3 619.2 L954.6 617.7 L959.8 616.9 L965.0 616.4 L970.2 616.6 L975.5 615.3 L980.7 614.5 L985.9 613.7 L991.1 613.1 L996.4 612.2 L1001.6 610.1 L1006.8 609.7 L1013.1 611.1 L1019.4 612.2 L1025.6 615.5 L1031.9 620.0 L1038.2 624.6 L1044.4 628.8 L1050.7 629.2 L1057.0 627.9 L1063.2 626.0 L1069.5 625.7 L1074.7 626.0 L1080.0 626.3 L1085.2 626.3 L1091.5 626.5 L1097.7 627.9 L1104.0 625.9 L1110.3 624.7 L1115.0 625.7 L1121.3 626.6 L1127.5 625.7 L1133.8 625.0 L1140.1 622.5 L1146.3 616.7 L1152.6 612.2 L1159.7 609.4 L1166.7 605.9 L1173.8 609.9 L1180.8 612.2 L1186.1 615.4 L1191.3 619.7 L1196.5 623.2 L1202.8 624.7 L1209.0 627.9 L1214.3 629.7 L1219.5 632.4 L1224.7 634.1 L1229.9 635.7 L1235.2 637.3 L1240.4 638.2 L1246.7 637.2 L1252.9 637.3 L1259.2 637.3 L1265.5 639.5 L1271.7 640.4 L1277.0 642.6 L1282.2 644.5 L1287.4 646.7 L1292.6 647.2 L1297.9 649.0 L1303.1 648.9 L1308.3 648.0 L1313.5 645.9 L1318.8 645.7 L1324.0 645.2 L1329.2 643.3 L1334.4 642.6 L1340.7 641.8 L1347.0 640.6 L1353.2 640.4 L1359.5 636.7 L1365.8 633.2 L1372.1 629.4 L1378.3 626.3 L1384.6 624.8 L1390.9 624.7 L1400.3 625.7 L1405.0 626.9 L1414.4 631.0 L1423.8 626.3 L1430.1 621.0 L1436.3 615.3 L1442.6 609.4 L1448.9 605.0 L1455.2 603.4 L1461.4 600.0 L1467.7 598.7 L1474.0 600.5 L1480.2 601.2 L1486.5 606.5 L1492.8 610.6 L1499.0 615.3 L1505.3 618.4 L1511.6 620.7 L1517.9 620.2 L1524.1 620.7 L1529.3 622.8 L1534.6 623.9 L1539.8 625.7 L1546.1 627.0 L1552.3 630.1 L1558.6 631.0 L1568.0 637.3 L1574.3 642.6 L1580.5 648.2 L1585.6 647.7 L1590.6 648.3 L1595.6 647.1 L1600.6 647.3 L1605.6 646.7 L1611.9 646.4 L1618.2 647.9 L1624.4 647.6 L1630.7 647.4 L1637.0 647.2 L1643.2 648.2 L1649.5 650.1 L1655.8 649.7 L1662.1 651.4 L1667.3 652.4 L1672.5 652.7 L1677.7 652.0 L1683.5 652.2 L1689.2 651.1 L1695.0 652.0 L1700.2 651.5 L1705.4 652.1 L1710.7 652.7 L1715.9 653.5 L1721.1 654.4 L1726.3 653.9 L1731.6 654.4 L1736.8 654.7 L1742.0 656.1 L1747.2 657.2 L1752.5 657.5 L1757.7 659.2 L1764.0 658.5 L1770.2 659.3 L1776.5 659.2 L1782.8 658.2 L1789.0 655.7 L1795.3 655.1 L1800.3 654.6 L1805.3 654.6 L1810.4 654.3 L1815.4 653.2 L1820.4 652.9 L1826.7 655.7 L1832.9 656.5 L1839.2 659.2 L1845.5 660.4 L1851.7 660.8 L1858.0 658.9 L1864.3 656.1 L1870.5 659.2 L1876.8 656.3 L1883.1 652.0 L1888.3 649.2 L1893.5 645.6 L1898.8 643.5 L1904.2 640.6 L1909.7 639.4 L1915.2 636.6 L1920.7 635.1 L1925.9 635.5 L1931.2 634.7 L1936.4 635.7 L1942.6 635.0 L1948.9 633.2 L1955.2 628.5 L1961.5 624.7 L1970.9 616.9 L1977.1 614.5 L1983.4 613.8 L1985.0 615.3 L1991.3 612.4 L1997.5 610.6 L2006.9 613.1 L2016.3 618.5 L2021.6 621.0 L2026.8 623.8 L2032.0 626.3 L2037.2 626.6 L2042.5 626.8 L2047.7 627.9 L2053.2 627.1 L2058.7 627.1 L2064.2 625.6 L2069.6 624.7 L2075.9 626.3 L2082.2 634.1 L2088.4 640.4 L2095.5 644.3 L2102.6 649.8 L2109.6 648.3 L2116.7 645.1 L2121.7 645.3 L2126.7 644.2 L2131.7 643.6 L2136.7 643.2 L2141.7 642.6 L2148.0 643.7 L2154.3 642.4 L2160.5 643.5 L2166.8 643.8 L2173.1 643.5 L2178.3 641.5 L2183.5 639.0 L2188.8 637.3 L2194.9 637.9 L2201.0 638.1 L2207.1 637.3 L2213.2 638.2 L2222.6 642.6 L2228.9 643.9 L2235.2 644.5 L2241.4 646.0 L2247.7 647.6 L2254.0 647.0 L2260.2 646.6 L2266.5 645.7 L2272.8 648.5 L2279.0 652.9 L2285.3 656.3 L2291.6 659.2 L2299.4 662.4 L2307.3 656.1 L2312.5 654.5 L2317.7 654.0 L2322.9 652.0 L2329.2 652.1 L2335.5 653.8 L2341.7 653.9 L2348.0 656.1 L2354.3 657.7 L2360.5 659.2 L2366.8 662.2 L2373.1 663.9 L2378.3 662.9 L2383.5 663.7 L2388.8 663.3 L2394.0 661.6 L2399.2 659.9 L2404.4 657.6 L2410.7 657.0 L2417.0 655.8 L2423.2 656.1 L2428.7 655.5 L2434.2 656.3 L2439.7 655.5 L2445.2 656.1 L2450.9 655.8 L2456.7 656.9 L2462.4 657.6 L2462.4 702.8 Z" fill="rgba(0,255,0,0.3)" stroke="none"/>
<path d="M252.2 649.8 L258.0 646.6 L263.8 643.5 L270.1 641.7 L276.3 640.4 L282.6 637.7 L288.9 636.3 L298.3 634.1 L301.4 654.5 L304.6 635.1 L314.0 634.1 L317.7 629.4 L320.2 638.8 L329.6 645.1 L335.9 638.8 L338.4 629.4 L340.6 640.4 L346.1 638.4 L351.6 635.1 L357.9 634.5 L364.1 635.7 L373.5 642.0 L376.7 632.6 L379.8 638.8 L389.2 644.5 L394.4 646.6 L399.6 649.4 L404.9 650.8 L408.0 616.9 L411.1 651.4 L416.4 651.7 L421.6 653.6 L426.8 654.5 L433.1 653.2 L439.4 651.4 L445.6 647.9 L451.9 645.9 L458.2 643.5 L464.4 642.8 L470.7 641.3 L477.0 640.8 L483.2 640.4 L489.5 639.7 L495.8 638.2 L505.2 637.3 L514.6 642.0 L520.9 642.6 L527.1 644.5 L535.0 647.6 L540.2 646.8 L545.4 646.3 L550.7 646.7 L555.9 645.6 L561.1 645.4 L566.3 643.5 L571.6 644.4 L576.8 645.5 L582.0 645.7 L588.3 642.9 L594.6 640.4 L600.8 636.9 L607.1 632.6 L613.4 631.1 L619.6 631.0 L629.0 633.2 L635.3 634.1 L641.6 635.7 L651.0 642.0 L660.4 645.7 L666.7 646.8 L672.9 647.3 L679.2 646.3 L685.5 644.5 L691.7 642.8 L698.0 641.3 L704.3 637.8 L710.5 635.7 L716.8 634.0 L723.1 633.2 L729.4 632.0 L735.6 631.9 L741.0 624.1 L743.5 633.2 L748.9 633.3 L754.4 634.1 L760.7 635.5 L767.0 635.7 L773.2 632.3 L779.5 630.1 L785.8 628.9 L792.1 626.3 L798.3 626.2 L804.6 624.7 L810.9 624.1 L817.1 625.0 L825.0 626.3 L830.2 626.6 L835.4 627.3 L840.7 627.9 L845.9 628.1 L851.1 629.8 L856.3 631.0 L861.6 631.4 L866.8 629.7 L872.0 630.1 L877.2 630.2 L882.5 629.4 L887.7 630.1 L894.0 631.8 L900.2 633.2 L906.5 634.4 L912.8 634.1 L918.0 632.0 L923.2 630.1 L928.4 629.4 L933.7 626.1 L938.9 624.3 L944.1 621.6 L949.3 619.2 L954.6 617.7 L959.8 616.9 L965.0 616.4 L970.2 616.6 L975.5 615.3 L980.7 614.5 L985.9 613.7 L991.1 613.1 L996.4 612.2 L1001.6 610.1 L1006.8 609.7 L1013.1 611.1 L1019.4 612.2 L1025.6 615.5 L1031.9 620.0 L1038.2 624.6 L1044.4 628.8 L1050.7 629.2 L1057.0 627.9 L1063.2 626.0 L1069.5 625.7 L1074.7 626.0 L1080.0 626.3 L1085.2 626.3 L1091.5 626.5 L1097.7 627.9 L1104.0 625.9 L1110.3 624.7 L1115.0 625.7 L1121.3 626.6 L1127.5 625.7 L1133.8 625.0 L1140.1 622.5 L1146.3 616.7 L1152.6 612.2 L1159.7 609.4 L1166.7 605.9 L1173.8 609.9 L1180.8 612.2 L1186.1 615.4 L1191.3 619.7 L1196.5 623.2 L1202.8 624.7 L1209.0 627.9 L1214.3 629.7 L1219.5 632.4 L1224.7 634.1 L1229.9 635.7 L1235.2 637.3 L1240.4 638.2 L1246.7 637.2 L1252.9 637.3 L1259.2 637.3 L1265.5 639.5 L1271.7 640.4 L1277.0 642.6 L1282.2 644.5 L1287.4 646.7 L1292.6 647.2 L1297.9 649.0 L1303.1 648.9 L1308.3 648.0 L1313.5 645.9 L1318.8 645.7 L1324.0 645.2 L1329.2 643.3 L1334.4 642.6 L1340.7 641.8 L1347.0 640.6 L1353.2 640.4 L1359.5 636.7 L1365.8 633.2 L1372.1 629.4 L1378.3 626.3 L1384.6 624.8 L1390.9 624.7 L1400.3 625.7 L1405.0 626.9 L1414.4 631.0 L1423.8 626.3 L1430.1 621.0 L1436.3 615.3 L1442.6 609.4 L1448.9 605.0 L1455.2 603.4 L1461.4 600.0 L1467.7 598.7 L1474.0 600.5 L1480.2 601.2 L1486.5 606.5 L1492.8 610.6 L1499.0 615.3 L1505.3 618.4 L1511.6 620.7 L1517.9 620.2 L1524.1 620.7 L1529.3 622.8 L1534.6 623.9 L1539.8 625.7 L1546.1 627.0 L1552.3 630.1 L1558.6 631.0 L1568.0 637.3 L1574.3 642.6 L1580.5 648.2 L1585.6 647.7 L1590.6 648.3 L1595.6 647.1 L1600.6 647.3 L1605.6 646.7 L1611.9 646.4 L1618.2 647.9 L1624.4 647.6 L1630.7 647.4 L1637.0 647.2 L1643.2 648.2 L1649.5 650.1 L1655.8 649.7 L1662.1 651.4 L1667.3 652.4 L1672.5 652.7 L1677.7 652.0 L1683.5 652.2 L1689.2 651.1 L1695.0 652.0 L1700.2 651.5 L1705.4 652.1 L1710.7 652.7 L1715.9 653.5 L1721.1 654.4 L1726.3 653.9 L1731.6 654.4 L1736.8 654.7 L1742.0 656.1 L1747.2 657.2 L1752.5 657.5 L1757.7 659.2 L1764.0 658.5 L1770.2 659.3 L1776.5 659.2 L1782.8 658.2 L1789.0 655.7 L1795.3 655.1 L1800.3 654.6 L1805.3 654.6 L1810.4 654.3 L1815.4 653.2 L1820.4 652.9 L1826.7 655.7 L1832.9 656.5 L1839.2 659.2 L1845.5 660.4 L1851.7 660.8 L1858.0 658.9 L1864.3 656.1 L1870.5 659.2 L1876.8 656.3 L1883.1 652.0 L1888.3 649.2 L1893.5 645.6 L1898.8 643.5 L1904.2 640.6 L1909.7 639.4 L1915.2 636.6 L1920.7 635.1 L1925.9 635.5 L1931.2 634.7 L1936.4 635.7 L1942.6 635.0 L1948.9 633.2 L1955.2 628.5 L1961.5 624.7 L1970.9 616.9 L1977.1 614.5 L1983.4 613.8 L1985.0 615.3 L1991.3 612.4 L1997.5 610.6 L2006.9 613.1 L2016.3 618.5 L2021.6 621.0 L2026.8 623.8 L2032.0 626.3 L2037.2 626.6 L2042.5 626.8 L2047.7 627.9 L2053.2 627.1 L2058.7 627.1 L2064.2 625.6 L2069.6 624.7 L2075.9 626.3 L2082.2 634.1 L2088.4 640.4 L2095.5 644.3 L2102.6 649.8 L2109.6 648.3 L2116.7 645.1 L2121.7 645.3 L2126.7 644.2 L2131.7 643.6 L2136.7 643.2 L2141.7 642.6 L2148.0 643.7 L2154.3 642.4 L2160.5 643.5 L2166.8 643.8 L2173.1 643.5 L2178.3 641.5 L2183.5 639.0 L2188.8 637.3 L2194.9 637.9 L2201.0 638.1 L2207.1 637.3 L2213.2 638.2 L2222.6 642.6 L2228.9 643.9 L2235.2 644.5 L2241.4 646.0 L2247.7 647.6 L2254.0 647.0 L2260.2 646.6 L2266.5 645.7 L2272.8 648.5 L2279.0 652.9 L2285.3 656.3 L2291.6 659.2 L2299.4 662.4 L2307.3 656.1 L2312.5 654.5 L2317.7 654.0 L2322.9 652.0 L2329.2 652.1 L2335.5 653.8 L2341.7 653.9 L2348.0 656.1 L2354.3 657.7 L2360.5 659.2 L2366.8 662.2 L2373.1 663.9 L2378.3 662.9 L2383.5 663.7 L2388.8 663.3 L2394.0 661.6 L2399.2 659.9 L2404.4 657.6 L2410.7 657.0 L2417.0 655.8 L2423.2 656.1 L2428.7 655.5 L2434.2 656.3 L2439.7 655.5 L2445.2 656.1 L2450.9 655.8 L2456.7 656.9 L2462.4 657.6" fill="none" stroke="#33ee33" stroke-width="2" stroke-linejoin="round"/>
<path d="M252.2 659.8H2360 L2366 688 H2373 L2377 698" stroke="rgba(255,110,110,0.65)" stroke-width="4" fill="none"/>
<path d="M252.2 698.5H2462.5" stroke="rgba(255,110,110,0.55)" stroke-width="4" fill="none"/>
<path d="M252.2 452.3 L255.3 576.1 L257.5 557.3 L262.2 557.2 L266.9 558.9 L271.6 555.8 L274.8 559.8 L279.5 555.8 L283.2 555.8 L285.1 613.8 L288.9 629.4 L292.0 620.0 L296.7 616.9 L301.4 618.5 L306.1 613.8 L309.3 623.2 L310.8 581.8 L314.0 620.0 L317.7 605.0 L321.8 620.0 L328.1 616.9 L332.8 618.5 L337.5 605.9 L342.2 620.0 L348.4 623.2 L351.0 595.0 L353.2 623.2 L356.3 626.3 L359.4 623.2 L364.1 626.3 L370.4 623.2 L375.1 626.3 L378.2 599.7 L379.8 626.3 L382.0 646.7 L384.5 620.0 L389.2 623.2 L393.9 626.3 L400.2 595.0 L403.3 623.2 L408.0 588.7 L411.1 626.3 L415.8 623.2 L419.0 616.9 L425.3 626.3 L431.5 624.7 L434.7 645.1 L439.4 645.1 L445.6 645.3 L451.9 645.1 L458.2 644.6 L464.4 645.1 L469.9 644.7 L475.4 643.5 L483.2 645.7 L489.5 644.3 L495.8 642.0 L498.9 648.2 L503.6 645.1 L508.3 645.1 L513.0 643.4 L517.7 645.1 L522.4 646.3 L527.1 645.1 L535.0 647.6 L541.3 648.2 L549.1 644.5 L553.2 549.5 L555.4 573.0 L560.1 571.4 L562.6 605.9 L566.3 565.2 L569.5 643.5 L575.8 645.7 L583.6 642.6 L589.9 645.7 L596.1 643.5 L600.8 648.2 L607.1 644.5 L611.8 644.2 L616.5 645.7 L621.2 641.3 L624.3 648.9 L629.0 645.7 L635.3 646.7 L640.0 642.6 L644.7 640.4 L651.0 644.5 L655.7 646.3 L660.4 644.5 L666.7 642.6 L671.4 643.4 L676.1 644.5 L682.3 644.8 L688.6 642.6 L694.9 645.7 L699.6 644.6 L704.3 643.5 L709.0 644.0 L713.7 642.3 L718.4 644.0 L723.1 643.5 L729.4 644.1 L735.6 642.0 L741.3 632.6 L743.5 640.4 L748.2 632.6 L752.9 633.0 L757.6 633.2 L760.7 642.6 L767.0 640.4 L773.2 640.4 L779.5 639.5 L785.8 643.5 L790.5 643.9 L795.2 642.6 L801.5 643.7 L807.7 643.5 L814.0 641.2 L820.3 642.0 L825.0 642.6 L830.2 643.8 L835.4 643.6 L840.7 643.5 L845.9 642.8 L851.1 641.9 L856.3 643.5 L861.6 644.5 L866.8 642.8 L872.0 642.6 L877.2 643.4 L882.5 644.0 L887.7 642.6 L892.4 644.6 L897.1 645.1 L903.4 645.8 L909.6 643.5 L914.3 643.2 L919.0 644.6 L923.7 643.3 L928.4 643.5 L933.9 645.1 L939.4 644.9 L944.9 642.1 L950.4 643.5 L955.6 641.9 L960.8 641.9 L966.1 642.6 L971.3 644.1 L976.5 642.0 L981.7 642.0 L987.0 642.4 L992.2 641.3 L997.4 642.0 L1003.7 641.7 L1010.0 641.3 L1013.1 634.1 L1016.2 638.8 L1022.5 638.4 L1028.8 638.8 L1034.0 638.1 L1039.2 638.7 L1044.4 638.2 L1049.1 638.3 L1053.8 639.2 L1058.5 638.2 L1063.2 637.3 L1069.5 639.3 L1075.8 638.2 L1080.5 639.7 L1085.2 640.3 L1089.9 639.3 L1094.6 638.8 L1100.9 640.4 L1105.6 637.2 L1110.3 636.3 L1115.0 638.2 L1121.3 640.6 L1127.5 640.4 L1132.2 639.7 L1136.9 635.7 L1140.1 643.5 L1146.3 644.5 L1152.6 642.6 L1157.6 642.7 L1162.6 643.1 L1167.7 641.2 L1172.7 643.3 L1177.7 642.0 L1182.7 642.2 L1187.7 641.2 L1192.7 640.4 L1197.8 643.2 L1202.8 642.0 L1208.3 644.1 L1213.7 641.3 L1219.2 644.2 L1224.7 643.5 L1229.9 642.7 L1235.2 641.2 L1240.4 642.0 L1245.4 641.4 L1250.4 643.2 L1255.4 643.7 L1260.5 640.8 L1265.5 642.6 L1270.2 643.5 L1274.9 643.5 L1278.0 637.3 L1284.3 636.4 L1290.5 638.8 L1295.3 639.9 L1300.0 639.5 L1306.2 644.5 L1312.5 644.5 L1318.8 645.7 L1324.0 646.4 L1329.2 646.0 L1334.4 643.5 L1339.9 643.6 L1345.4 645.3 L1350.9 642.9 L1356.4 643.5 L1361.1 642.8 L1365.8 645.1 L1371.0 645.7 L1376.2 643.8 L1381.5 645.7 L1386.7 644.6 L1391.9 645.4 L1397.1 645.7 L1405.0 644.5 L1410.2 645.3 L1415.4 644.1 L1420.7 645.7 L1425.9 644.4 L1431.1 647.7 L1436.3 646.7 L1442.6 647.1 L1448.9 648.9 L1453.6 650.0 L1458.3 649.2 L1463.0 646.8 L1467.7 646.7 L1472.9 646.8 L1478.1 647.3 L1483.4 648.0 L1488.6 648.1 L1493.8 648.2 L1499.0 648.2 L1504.1 648.6 L1509.1 649.6 L1514.1 647.9 L1519.1 647.5 L1524.1 647.6 L1529.6 648.6 L1535.1 647.0 L1540.6 647.4 L1546.1 648.2 L1551.3 650.0 L1556.5 648.3 L1561.7 648.4 L1567.0 646.5 L1572.2 647.9 L1577.4 648.2 L1582.6 648.6 L1587.9 646.7 L1593.1 649.0 L1598.3 649.1 L1603.5 647.2 L1608.8 648.9 L1614.0 648.9 L1619.2 647.9 L1624.4 647.6 L1629.1 648.5 L1633.8 647.5 L1638.5 648.2 L1640.7 700.0 L1643.9 648.2 L1649.8 649.0 L1655.8 648.2 L1661.0 649.1 L1666.2 646.5 L1671.5 648.2 L1676.2 647.3 L1680.9 650.1 L1685.6 651.8 L1690.3 649.9 L1695.0 651.4 L1701.3 644.5 L1707.5 648.9 L1712.2 648.9 L1716.9 649.7 L1721.6 648.9 L1726.3 649.8 L1731.6 648.8 L1736.8 648.1 L1742.0 648.2 L1747.2 647.6 L1752.5 648.2 L1757.7 647.6 L1762.7 647.3 L1767.7 648.1 L1772.7 649.9 L1777.8 647.7 L1782.8 649.8 L1787.5 639.5 L1793.0 640.2 L1798.4 640.4 L1804.7 635.1 L1809.4 636.2 L1814.1 635.7 L1820.4 634.2 L1826.7 634.1 L1829.8 640.4 L1832.0 485.2 L1836.1 489.9 L1842.3 489.0 L1848.6 492.1 L1854.9 492.1 L1861.1 494.0 L1867.4 493.5 L1873.7 490.9 L1878.4 490.5 L1883.1 490.8 L1887.8 492.3 L1892.5 493.1 L1898.8 494.3 L1905.0 494.0 L1911.3 496.2 L1914.4 504.0 L1920.7 500.9 L1927.0 500.3 L1933.2 502.5 L1937.9 502.6 L1942.6 504.0 L1945.8 493.1 L1950.5 492.0 L1955.2 492.1 L1959.9 493.3 L1964.6 492.1 L1967.1 638.2 L1973.4 640.4 L1976.2 493.1 L1985.0 493.1 L1989.7 493.6 L1994.4 494.6 L2000.7 497.8 L2006.9 494.0 L2010.1 638.8 L2016.3 639.8 L2022.6 638.2 L2028.9 637.3 L2035.2 638.8 L2041.4 636.4 L2047.7 635.1 L2050.8 638.2 L2053.3 493.1 L2060.2 490.9 L2066.5 494.0 L2072.8 494.1 L2079.0 493.1 L2085.3 494.5 L2091.6 493.1 L2097.1 493.4 L2102.6 494.0 L2105.7 638.8 L2110.4 635.1 L2115.6 634.1 L2120.8 633.7 L2126.1 635.1 L2131.3 635.6 L2136.5 634.8 L2141.7 636.3 L2146.4 637.3 L2151.1 637.2 L2155.8 634.7 L2160.5 635.7 L2166.8 635.2 L2173.1 636.3 L2178.3 637.8 L2183.5 637.5 L2188.8 637.3 L2193.8 637.9 L2198.8 635.7 L2203.8 635.7 L2208.5 634.7 L2213.2 636.3 L2215.7 490.9 L2222.6 493.1 L2227.3 492.6 L2232.0 494.6 L2236.7 493.0 L2241.4 494.0 L2246.1 494.0 L2250.8 494.8 L2255.5 495.4 L2260.2 496.2 L2264.9 496.1 L2269.6 498.2 L2274.3 495.7 L2279.0 497.1 L2284.3 496.1 L2289.5 500.2 L2294.7 499.3 L2302.6 497.8 L2305.7 638.2 L2311.2 638.6 L2316.7 636.3 L2321.4 638.1 L2326.1 636.1 L2330.8 638.0 L2335.5 636.3 L2341.7 638.3 L2348.0 637.3 L2354.6 635.8 L2361.2 636.3 L2363.7 678.0 L2368.9 679.2 L2374.1 679.9 L2379.4 679.0 L2384.4 679.6 L2389.4 679.0 L2394.4 678.2 L2399.4 678.4 L2404.4 679.0 L2409.1 677.7 L2413.8 676.9 L2418.5 678.6 L2423.2 678.0 L2428.7 676.9 L2434.2 678.4 L2439.7 675.2 L2445.2 676.5 L2450.9 678.7 L2456.7 678.8 L2462.4 679.0" fill="none" stroke="rgba(0,0,0,0.72)" stroke-width="4.5" stroke-linejoin="round"/>
<path d="M252.2 702.8 L252.2 702.8 L256.0 721.9 L259.1 703.1 L264.9 703.5 L270.6 703.8 L276.3 703.1 L285.8 700.0 L292.0 720.3 L298.3 678.0 L303.0 698.4 L309.3 678.0 L312.4 701.5 L317.1 685.9 L321.8 703.1 L328.1 700.0 L335.9 709.4 L339.0 690.6 L343.7 703.1 L350.0 689.0 L354.7 703.1 L357.9 682.7 L362.6 703.1 L368.8 679.6 L373.5 703.1 L378.2 679.6 L382.0 725.0 L386.1 682.7 L390.8 703.1 L397.0 679.6 L401.7 703.1 L406.4 678.0 L411.1 703.1 L415.8 681.2 L420.5 703.1 L426.8 681.2 L431.5 703.1 L437.0 704.1 L442.5 704.7 L448.0 704.3 L453.5 705.0 L458.9 702.5 L464.4 704.0 L469.7 703.8 L474.9 705.1 L480.1 704.0 L485.3 704.6 L490.6 702.1 L495.8 703.1 L501.3 703.0 L506.8 703.1 L510.5 794.0 L513.0 703.1 L518.5 702.3 L524.0 703.2 L529.5 703.3 L535.0 703.1 L540.2 701.6 L545.4 702.3 L550.7 703.1 L553.2 714.1 L555.7 703.1 L563.8 703.1 L566.3 678.0 L568.9 703.1 L573.9 702.4 L579.0 704.4 L584.1 703.9 L589.2 702.1 L594.2 704.0 L599.3 702.0 L604.4 703.5 L609.5 702.0 L614.6 701.6 L619.6 703.1 L622.8 706.2 L625.9 703.1 L631.1 704.2 L636.3 702.2 L641.4 702.2 L646.6 704.6 L651.8 704.2 L657.0 702.5 L662.2 704.5 L667.3 703.2 L672.5 703.6 L677.7 702.2 L682.9 704.4 L688.1 703.7 L693.2 704.5 L698.4 704.3 L703.6 702.5 L708.8 702.7 L714.0 702.1 L719.1 702.0 L724.3 701.8 L729.5 702.5 L734.7 703.4 L739.9 701.6 L745.0 703.1 L748.2 694.6 L751.3 703.1 L756.6 703.6 L761.8 702.6 L767.1 702.5 L772.4 704.1 L777.6 703.0 L782.9 702.6 L788.2 703.0 L793.4 703.7 L798.7 701.8 L803.9 704.5 L809.2 701.7 L814.5 703.9 L819.7 704.1 L825.0 703.1 L830.0 701.7 L835.1 704.0 L840.1 702.7 L845.2 703.3 L850.2 701.6 L855.2 701.7 L860.3 702.1 L865.3 704.5 L870.4 702.2 L875.4 703.9 L880.5 704.4 L885.5 704.4 L890.5 702.6 L895.6 702.7 L900.6 703.2 L905.7 703.9 L910.7 701.9 L915.7 703.8 L920.8 704.0 L925.8 704.2 L930.9 701.7 L935.9 704.4 L940.9 701.9 L946.0 702.6 L951.0 703.4 L956.1 704.4 L961.1 702.6 L966.2 704.4 L971.2 703.2 L976.2 702.5 L981.3 702.6 L986.3 702.1 L991.4 701.8 L996.4 702.1 L1001.4 703.7 L1006.5 704.6 L1011.5 703.1 L1014.7 693.7 L1017.8 703.1 L1022.9 702.1 L1028.0 701.7 L1033.1 704.6 L1038.3 703.2 L1043.4 702.8 L1048.5 702.3 L1053.6 703.4 L1058.7 704.1 L1063.8 703.0 L1069.0 702.9 L1074.1 701.8 L1079.2 704.4 L1084.3 701.7 L1089.4 703.1 L1094.5 704.1 L1099.7 702.0 L1104.8 703.8 L1109.9 704.5 L1115.0 703.1 L1120.3 703.5 L1125.6 704.0 L1130.9 701.9 L1136.2 702.9 L1141.5 702.1 L1146.8 704.1 L1152.1 702.5 L1157.4 703.0 L1162.7 704.6 L1168.1 704.2 L1173.4 704.5 L1178.7 703.0 L1184.0 703.1 L1186.5 729.7 L1189.0 703.1 L1194.0 703.1 L1199.0 703.8 L1204.1 703.0 L1209.1 702.5 L1214.1 702.8 L1219.1 702.0 L1224.1 702.7 L1229.2 704.6 L1234.2 704.5 L1239.2 703.5 L1244.2 703.1 L1249.3 702.6 L1254.3 701.9 L1259.3 702.4 L1264.3 703.9 L1269.4 704.2 L1274.4 702.7 L1279.4 704.0 L1284.4 703.9 L1289.5 703.7 L1294.5 703.6 L1299.5 703.9 L1304.5 702.7 L1309.5 703.7 L1314.6 702.4 L1319.6 703.1 L1324.6 703.9 L1329.6 703.7 L1334.7 702.5 L1339.7 704.4 L1344.7 703.6 L1349.7 703.3 L1354.8 701.6 L1359.8 703.2 L1364.8 702.4 L1369.8 703.6 L1374.9 703.0 L1379.9 704.1 L1384.9 703.5 L1389.9 704.0 L1395.0 702.6 L1400.0 703.5 L1405.0 703.1 L1410.1 703.8 L1415.2 704.1 L1420.2 702.7 L1425.3 704.1 L1430.4 704.2 L1435.5 703.7 L1440.5 704.5 L1445.6 704.5 L1450.7 703.2 L1455.8 703.2 L1460.8 702.1 L1465.9 704.1 L1471.0 704.4 L1476.1 703.0 L1481.2 703.7 L1486.2 703.8 L1491.3 703.8 L1496.4 702.1 L1501.5 703.9 L1506.5 703.3 L1511.6 703.6 L1516.7 702.9 L1521.8 703.5 L1526.8 703.9 L1531.9 703.5 L1537.0 703.8 L1542.1 701.7 L1547.2 702.1 L1552.2 702.9 L1557.3 703.6 L1562.4 702.3 L1567.5 703.7 L1572.5 703.5 L1577.6 701.7 L1582.7 703.0 L1587.8 702.3 L1592.8 701.8 L1597.9 702.0 L1603.0 702.6 L1608.1 702.1 L1613.2 702.2 L1618.2 701.7 L1623.3 703.0 L1628.4 702.7 L1633.5 703.4 L1638.5 703.1 L1640.7 797.1 L1643.2 703.1 L1648.7 703.4 L1654.2 702.3 L1659.6 704.3 L1665.1 701.6 L1670.6 702.8 L1676.0 702.4 L1681.5 703.1 L1684.0 797.1 L1686.5 703.1 L1695.0 703.1 L1700.1 702.8 L1705.1 701.9 L1710.2 704.1 L1715.3 702.7 L1720.4 701.7 L1725.4 703.4 L1730.5 701.9 L1735.6 703.2 L1740.7 702.6 L1745.7 703.3 L1750.8 704.5 L1755.9 704.1 L1760.9 702.9 L1766.0 704.0 L1771.1 703.5 L1776.2 702.7 L1781.2 702.0 L1786.3 703.4 L1791.4 703.3 L1796.5 704.5 L1801.5 704.5 L1806.6 703.4 L1811.7 702.7 L1816.7 704.3 L1821.8 701.6 L1826.9 701.9 L1832.0 703.3 L1837.0 703.4 L1842.1 702.0 L1847.2 703.5 L1852.3 704.3 L1857.3 702.7 L1862.4 702.9 L1867.5 702.3 L1872.5 702.5 L1877.6 704.5 L1882.7 702.7 L1887.8 704.5 L1892.8 704.3 L1897.9 703.4 L1903.0 702.4 L1908.1 704.5 L1913.1 703.1 L1918.2 702.8 L1923.3 702.6 L1928.3 704.6 L1933.4 703.1 L1938.5 702.5 L1943.6 703.0 L1948.6 702.0 L1953.7 703.5 L1958.8 702.9 L1963.9 702.5 L1968.9 703.9 L1974.0 703.1 L1976.2 557.3 L1978.7 703.1 L1985.0 703.1 L1990.5 704.1 L1996.0 703.1 L1998.2 709.4 L2000.7 703.1 L2005.8 701.6 L2010.9 703.2 L2016.0 702.4 L2021.1 704.4 L2026.2 703.9 L2031.3 702.3 L2036.5 702.4 L2041.6 702.1 L2046.7 704.6 L2051.8 702.5 L2056.9 703.4 L2062.0 703.0 L2067.1 703.5 L2072.2 703.4 L2077.4 703.8 L2082.5 702.0 L2087.6 703.9 L2092.7 702.5 L2097.8 703.2 L2102.9 702.6 L2108.0 702.5 L2113.1 703.2 L2118.3 703.0 L2123.4 702.7 L2128.5 703.8 L2133.6 703.4 L2138.7 701.7 L2143.8 702.4 L2148.9 703.0 L2154.0 704.4 L2159.1 704.3 L2164.3 703.2 L2169.4 701.6 L2174.5 703.9 L2179.6 702.9 L2184.7 703.3 L2189.8 703.7 L2194.9 703.5 L2200.0 703.1 L2205.1 703.0 L2210.1 704.3 L2215.2 702.8 L2220.2 702.8 L2225.3 704.2 L2230.3 702.2 L2235.4 702.5 L2240.4 704.1 L2245.5 701.8 L2250.5 704.1 L2255.6 703.7 L2260.6 702.9 L2265.6 702.5 L2270.7 703.9 L2275.7 704.3 L2280.8 702.0 L2285.8 703.0 L2290.9 703.3 L2295.9 703.1 L2301.0 702.6 L2306.0 702.1 L2311.1 703.4 L2316.1 704.0 L2321.1 701.8 L2326.2 702.3 L2331.2 704.1 L2336.3 704.0 L2341.3 703.6 L2346.4 701.7 L2351.4 703.8 L2356.5 704.5 L2361.5 704.6 L2366.6 703.7 L2371.6 701.8 L2376.7 704.1 L2381.7 702.3 L2386.7 703.5 L2391.8 704.5 L2396.8 703.7 L2401.9 702.0 L2406.9 702.5 L2412.0 704.4 L2417.0 702.1 L2422.1 703.4 L2427.1 702.8 L2432.2 702.1 L2437.2 703.5 L2442.2 701.7 L2447.3 701.9 L2452.3 702.7 L2457.4 701.8 L2462.4 703.1 L2462.4 702.8 Z" fill="rgba(255,0,0,0.3)" stroke="none"/>
<path d="M252.2 702.8 L256.0 721.9 L259.1 703.1 L264.9 703.5 L270.6 703.8 L276.3 703.1 L285.8 700.0 L292.0 720.3 L298.3 678.0 L303.0 698.4 L309.3 678.0 L312.4 701.5 L317.1 685.9 L321.8 703.1 L328.1 700.0 L335.9 709.4 L339.0 690.6 L343.7 703.1 L350.0 689.0 L354.7 703.1 L357.9 682.7 L362.6 703.1 L368.8 679.6 L373.5 703.1 L378.2 679.6 L382.0 725.0 L386.1 682.7 L390.8 703.1 L397.0 679.6 L401.7 703.1 L406.4 678.0 L411.1 703.1 L415.8 681.2 L420.5 703.1 L426.8 681.2 L431.5 703.1 L437.0 704.1 L442.5 704.7 L448.0 704.3 L453.5 705.0 L458.9 702.5 L464.4 704.0 L469.7 703.8 L474.9 705.1 L480.1 704.0 L485.3 704.6 L490.6 702.1 L495.8 703.1 L501.3 703.0 L506.8 703.1 L510.5 794.0 L513.0 703.1 L518.5 702.3 L524.0 703.2 L529.5 703.3 L535.0 703.1 L540.2 701.6 L545.4 702.3 L550.7 703.1 L553.2 714.1 L555.7 703.1 L563.8 703.1 L566.3 678.0 L568.9 703.1 L573.9 702.4 L579.0 704.4 L584.1 703.9 L589.2 702.1 L594.2 704.0 L599.3 702.0 L604.4 703.5 L609.5 702.0 L614.6 701.6 L619.6 703.1 L622.8 706.2 L625.9 703.1 L631.1 704.2 L636.3 702.2 L641.4 702.2 L646.6 704.6 L651.8 704.2 L657.0 702.5 L662.2 704.5 L667.3 703.2 L672.5 703.6 L677.7 702.2 L682.9 704.4 L688.1 703.7 L693.2 704.5 L698.4 704.3 L703.6 702.5 L708.8 702.7 L714.0 702.1 L719.1 702.0 L724.3 701.8 L729.5 702.5 L734.7 703.4 L739.9 701.6 L745.0 703.1 L748.2 694.6 L751.3 703.1 L756.6 703.6 L761.8 702.6 L767.1 702.5 L772.4 704.1 L777.6 703.0 L782.9 702.6 L788.2 703.0 L793.4 703.7 L798.7 701.8 L803.9 704.5 L809.2 701.7 L814.5 703.9 L819.7 704.1 L825.0 703.1 L830.0 701.7 L835.1 704.0 L840.1 702.7 L845.2 703.3 L850.2 701.6 L855.2 701.7 L860.3 702.1 L865.3 704.5 L870.4 702.2 L875.4 703.9 L880.5 704.4 L885.5 704.4 L890.5 702.6 L895.6 702.7 L900.6 703.2 L905.7 703.9 L910.7 701.9 L915.7 703.8 L920.8 704.0 L925.8 704.2 L930.9 701.7 L935.9 704.4 L940.9 701.9 L946.0 702.6 L951.0 703.4 L956.1 704.4 L961.1 702.6 L966.2 704.4 L971.2 703.2 L976.2 702.5 L981.3 702.6 L986.3 702.1 L991.4 701.8 L996.4 702.1 L1001.4 703.7 L1006.5 704.6 L1011.5 703.1 L1014.7 693.7 L1017.8 703.1 L1022.9 702.1 L1028.0 701.7 L1033.1 704.6 L1038.3 703.2 L1043.4 702.8 L1048.5 702.3 L1053.6 703.4 L1058.7 704.1 L1063.8 703.0 L1069.0 702.9 L1074.1 701.8 L1079.2 704.4 L1084.3 701.7 L1089.4 703.1 L1094.5 704.1 L1099.7 702.0 L1104.8 703.8 L1109.9 704.5 L1115.0 703.1 L1120.3 703.5 L1125.6 704.0 L1130.9 701.9 L1136.2 702.9 L1141.5 702.1 L1146.8 704.1 L1152.1 702.5 L1157.4 703.0 L1162.7 704.6 L1168.1 704.2 L1173.4 704.5 L1178.7 703.0 L1184.0 703.1 L1186.5 729.7 L1189.0 703.1 L1194.0 703.1 L1199.0 703.8 L1204.1 703.0 L1209.1 702.5 L1214.1 702.8 L1219.1 702.0 L1224.1 702.7 L1229.2 704.6 L1234.2 704.5 L1239.2 703.5 L1244.2 703.1 L1249.3 702.6 L1254.3 701.9 L1259.3 702.4 L1264.3 703.9 L1269.4 704.2 L1274.4 702.7 L1279.4 704.0 L1284.4 703.9 L1289.5 703.7 L1294.5 703.6 L1299.5 703.9 L1304.5 702.7 L1309.5 703.7 L1314.6 702.4 L1319.6 703.1 L1324.6 703.9 L1329.6 703.7 L1334.7 702.5 L1339.7 704.4 L1344.7 703.6 L1349.7 703.3 L1354.8 701.6 L1359.8 703.2 L1364.8 702.4 L1369.8 703.6 L1374.9 703.0 L1379.9 704.1 L1384.9 703.5 L1389.9 704.0 L1395.0 702.6 L1400.0 703.5 L1405.0 703.1 L1410.1 703.8 L1415.2 704.1 L1420.2 702.7 L1425.3 704.1 L1430.4 704.2 L1435.5 703.7 L1440.5 704.5 L1445.6 704.5 L1450.7 703.2 L1455.8 703.2 L1460.8 702.1 L1465.9 704.1 L1471.0 704.4 L1476.1 703.0 L1481.2 703.7 L1486.2 703.8 L1491.3 703.8 L1496.4 702.1 L1501.5 703.9 L1506.5 703.3 L1511.6 703.6 L1516.7 702.9 L1521.8 703.5 L1526.8 703.9 L1531.9 703.5 L1537.0 703.8 L1542.1 701.7 L1547.2 702.1 L1552.2 702.9 L1557.3 703.6 L1562.4 702.3 L1567.5 703.7 L1572.5 703.5 L1577.6 701.7 L1582.7 703.0 L1587.8 702.3 L1592.8 701.8 L1597.9 702.0 L1603.0 702.6 L1608.1 702.1 L1613.2 702.2 L1618.2 701.7 L1623.3 703.0 L1628.4 702.7 L1633.5 703.4 L1638.5 703.1 L1640.7 797.1 L1643.2 703.1 L1648.7 703.4 L1654.2 702.3 L1659.6 704.3 L1665.1 701.6 L1670.6 702.8 L1676.0 702.4 L1681.5 703.1 L1684.0 797.1 L1686.5 703.1 L1695.0 703.1 L1700.1 702.8 L1705.1 701.9 L1710.2 704.1 L1715.3 702.7 L1720.4 701.7 L1725.4 703.4 L1730.5 701.9 L1735.6 703.2 L1740.7 702.6 L1745.7 703.3 L1750.8 704.5 L1755.9 704.1 L1760.9 702.9 L1766.0 704.0 L1771.1 703.5 L1776.2 702.7 L1781.2 702.0 L1786.3 703.4 L1791.4 703.3 L1796.5 704.5 L1801.5 704.5 L1806.6 703.4 L1811.7 702.7 L1816.7 704.3 L1821.8 701.6 L1826.9 701.9 L1832.0 703.3 L1837.0 703.4 L1842.1 702.0 L1847.2 703.5 L1852.3 704.3 L1857.3 702.7 L1862.4 702.9 L1867.5 702.3 L1872.5 702.5 L1877.6 704.5 L1882.7 702.7 L1887.8 704.5 L1892.8 704.3 L1897.9 703.4 L1903.0 702.4 L1908.1 704.5 L1913.1 703.1 L1918.2 702.8 L1923.3 702.6 L1928.3 704.6 L1933.4 703.1 L1938.5 702.5 L1943.6 703.0 L1948.6 702.0 L1953.7 703.5 L1958.8 702.9 L1963.9 702.5 L1968.9 703.9 L1974.0 703.1 L1976.2 557.3 L1978.7 703.1 L1985.0 703.1 L1990.5 704.1 L1996.0 703.1 L1998.2 709.4 L2000.7 703.1 L2005.8 701.6 L2010.9 703.2 L2016.0 702.4 L2021.1 704.4 L2026.2 703.9 L2031.3 702.3 L2036.5 702.4 L2041.6 702.1 L2046.7 704.6 L2051.8 702.5 L2056.9 703.4 L2062.0 703.0 L2067.1 703.5 L2072.2 703.4 L2077.4 703.8 L2082.5 702.0 L2087.6 703.9 L2092.7 702.5 L2097.8 703.2 L2102.9 702.6 L2108.0 702.5 L2113.1 703.2 L2118.3 703.0 L2123.4 702.7 L2128.5 703.8 L2133.6 703.4 L2138.7 701.7 L2143.8 702.4 L2148.9 703.0 L2154.0 704.4 L2159.1 704.3 L2164.3 703.2 L2169.4 701.6 L2174.5 703.9 L2179.6 702.9 L2184.7 703.3 L2189.8 703.7 L2194.9 703.5 L2200.0 703.1 L2205.1 703.0 L2210.1 704.3 L2215.2 702.8 L2220.2 702.8 L2225.3 704.2 L2230.3 702.2 L2235.4 702.5 L2240.4 704.1 L2245.5 701.8 L2250.5 704.1 L2255.6 703.7 L2260.6 702.9 L2265.6 702.5 L2270.7 703.9 L2275.7 704.3 L2280.8 702.0 L2285.8 703.0 L2290.9 703.3 L2295.9 703.1 L2301.0 702.6 L2306.0 702.1 L2311.1 703.4 L2316.1 704.0 L2321.1 701.8 L2326.2 702.3 L2331.2 704.1 L2336.3 704.0 L2341.3 703.6 L2346.4 701.7 L2351.4 703.8 L2356.5 704.5 L2361.5 704.6 L2366.6 703.7 L2371.6 701.8 L2376.7 704.1 L2381.7 702.3 L2386.7 703.5 L2391.8 704.5 L2396.8 703.7 L2401.9 702.0 L2406.9 702.5 L2412.0 704.4 L2417.0 702.1 L2422.1 703.4 L2427.1 702.8 L2432.2 702.1 L2437.2 703.5 L2442.2 701.7 L2447.3 701.9 L2452.3 702.7 L2457.4 701.8 L2462.4 703.1" fill="none" stroke="#ff2020" stroke-width="2.2" stroke-linejoin="round"/>
<rect x="209.0" y="330.0" width="80" height="24" fill="#ffb4b4" stroke="#ff2f2f" stroke-width="2"/>
<text x="301.0" y="350.5" font-family="Liberation Sans" font-size="24" fill="#8e8e8e">EVU</text>
<rect x="368.0" y="330.0" width="80" height="24" fill="#cccccc" stroke="#444444" stroke-width="4"/>
<text x="460.0" y="350.5" font-family="Liberation Sans" font-size="24" fill="#8e8e8e">Hausverbr.</text>
<rect x="595.0" y="330.0" width="80" height="24" fill="#e6e6ff" stroke="#e4e4f0" stroke-width="4"/>
<text x="687.0" y="350.5" font-family="Liberation Sans" font-size="24" fill="#8e8e8e">LP ges.</text>
<rect x="788.0" y="330.0" width="80" height="24" fill="#ffd9d9" stroke="#ff9d9d" stroke-width="4"/>
<text x="880.0" y="350.5" font-family="Liberation Sans" font-size="24" fill="#8e8e8e">AVM-Entfeuchter</text>
<rect x="1083.0" y="330.0" width="80" height="24" fill="#ffd9d9" stroke="#ff9d9d" stroke-width="4"/>
<text x="1175.0" y="350.5" font-family="Liberation Sans" font-size="24" fill="#8e8e8e">AVM-Garten</text>
<rect x="1328.0" y="330.0" width="80" height="24" fill="#ffd9d9" stroke="#ff9d9d" stroke-width="4"/>
<text x="1420.0" y="350.5" font-family="Liberation Sans" font-size="24" fill="#8e8e8e">AVM-Buero</text>
<rect x="1563.0" y="330.0" width="80" height="24" fill="#b5ffb5" stroke="#2cff2c" stroke-width="2"/>
<text x="1655.0" y="350.5" font-family="Liberation Sans" font-size="24" fill="#8e8e8e">PV ges.</text>
<rect x="1757.0" y="330.0" width="80" height="24" fill="#5050ff" stroke="#1a1aff" stroke-width="4"/>
<text x="1849.0" y="350.5" font-family="Liberation Sans" font-size="24" fill="#8e8e8e">LP-1 mit Display</text>
<rect x="2047.0" y="330.0" width="80" height="24" fill="#5050ff" stroke="#1a1aff" stroke-width="4"/>
<text x="2139.0" y="350.5" font-family="Liberation Sans" font-size="24" fill="#8e8e8e">LP-2 ohne Display</text>
<rect x="2356.0" y="330.0" width="80" height="24" fill="#e5e5e5" stroke="#7b7bff" stroke-width="4" stroke-dasharray="20 10"/>
<text x="2448.0" y="350.5" font-family="Liberation Sans" font-size="24" fill="#8e8e8e">Ioniq-5</text>
<rect x="964.0" y="374.0" width="80" height="24" fill="#e5e5e5" stroke="#7b7bff" stroke-width="4" stroke-dasharray="20 10"/>
<text x="1056.0" y="394.5" font-family="Liberation Sans" font-size="24" fill="#8e8e8e">CUPRA Born</text>
<rect x="1217.0" y="374.0" width="80" height="24" fill="#edffb1" stroke="#ffae3f" stroke-width="2"/>
<text x="1309.0" y="394.5" font-family="Liberation Sans" font-size="24" fill="#8e8e8e">Speicher ges.</text>
<rect x="1476.0" y="374.0" width="80" height="24" fill="#edffb1" stroke="#ffae45" stroke-width="4" stroke-dasharray="20 10"/>
<text x="1568.0" y="394.5" font-family="Liberation Sans" font-size="24" fill="#8e8e8e">Speicher ges. SoC</text>
</svg>
<!-- DIAGRAM_END -->

<!-- TABLE_START -->
<!-- table header card -->
<div class="a" style="left:137px;top:1032px;width:2458px;height:108px;border:2px solid #e3e3e3;border-bottom:none;border-radius:8px 8px 0 0;background:#b6bccb"></div>
<div class="a" style="left:139px;top:1138px;width:2454px;height:2px;background:#a0a5b3"></div>
<div class="t f32" style="left:157.5px;top:1047px;color:#505050;font-weight:bold">Ladepunkt</div>
<div class="t f32" style="left:766px;top:1047px;color:#505050;font-weight:bold">Lademodus</div>
<div class="t f32" style="left:766px;top:1095px;color:#505050;font-weight:bold">Fahrzeug</div>
<div class="t f32" style="left:1375px;top:1047px;color:#505050;font-weight:bold">Parameter</div>
<div class="t f32" style="left:1375px;top:1095px;color:#505050;font-weight:bold">SoC</div>
<div class="t f32" style="left:1985px;top:1047px;color:#505050;font-weight:bold">geladen</div>
<!-- main dark card -->
<div class="a" style="left:137px;top:1140px;width:2458px;height:2px;background:#ececec"></div>
<div class="a" style="left:137px;top:1142px;width:2458px;height:798px;border:2px solid #262c34;border-radius:0 0 8px 8px;background:#fff"></div>
<div class="a" style="left:139px;top:1144px;width:2454px;height:104px;background:#d1d7e6"></div>
<div class="a" style="left:139px;top:1248px;width:2454px;height:2px;background:#262c34"></div>
<div class="a" style="left:139px;top:1250px;width:2454px;height:104px;background:#d1d7e6"></div>
<div class="a" style="left:139px;top:1354px;width:2454px;height:2px;background:#b4b9c7"></div>
<div class="t f32" style="left:157.5px;top:1157px;color:#505050;font-weight:bold">LP-1 mit Display</div>
<div class="t f32" style="left:766px;top:1157px;color:#505050">Stop</div>
<div class="t f32" style="left:766px;top:1205px;color:#505050">CUPRA Born</div>
<div class="t f32" style="left:1375px;top:1157px;color:#505050">0 W / 0 A</div>
<div class="t f32" style="left:1375px;top:1205px;color:#505050">60 %</div>
<div class="t f32" style="left:1985px;top:1157px;color:#505050">0,0 kWh / 0,0 km</div>
<div class="t f32" style="left:157.5px;top:1263px;color:#505050;font-weight:bold">LP-2 ohne Display</div>
<div class="t f32" style="left:766px;top:1263px;color:#505050">Stop</div>
<div class="t f32" style="left:766px;top:1311px;color:#505050">Ioniq-5</div>
<div class="t f32" style="left:1375px;top:1263px;color:#505050">24 W / 0 A</div>
<div class="t f32" style="left:1375px;top:1311px;color:#505050">69 %</div>
<div class="t f32" style="left:1985px;top:1263px;color:#505050">0,0 kWh / 0,0 km</div>
<svg class="a" style="left:0;top:1100px" width="2732" height="300" viewBox="0 1100 2732 300">
 <rect x="2546" y="1158" width="28" height="28" rx="4" fill="#505050"/><path d="M2560 1163v18M2551 1172h18" stroke="#d1d7e6" stroke-width="5.5"/>
 <rect x="2546" y="1264" width="28" height="28" rx="4" fill="#505050"/><path d="M2551 1278h18" stroke="#d1d7e6" stroke-width="5.5"/>
 <g id="redo1"><path d="M1481.5 1228.3 A9.6 9.6 0 1 1 1480.2 1215.5" fill="none" stroke="#505050" stroke-width="4"/><path d="M1476.5 1220.5 L1485.8 1220.5 L1485.8 1211 Z" fill="#505050"/></g>
 <use href="#redo1" y="106"/>
</svg>

<!-- TABLE_END -->

<!-- DETAILS_START -->
<!-- alert -->
<div class="a" style="left:148px;top:1366px;width:2434px;height:100px;background:#d1ecf1;border:2px solid #bee5eb;border-radius:8px"></div>
<div class="t f32" style="left:238px;top:1401px;color:#0c5460;letter-spacing:0.41px">Keine Ladung, da der Ladepunkt gesperrt ist.</div>
<div class="t f32" style="left:193px;top:1483px;color:#505050;letter-spacing:0.25px">Ladepunkt sperren</div>
<div class="t f32" style="left:207px;top:1625px;color:#505050">Fahrzeug</div>
<div class="t f32" style="left:159px;top:1709px;color:#505050">Lademodus</div>
<div class="t f32" style="left:203px;top:1779px;color:#505050">Priorität</div>
<div class="t f32" style="left:200px;top:1849px;color:#505050">Zeitladen</div>
<!-- toggle Ja -->
<div class="a" style="left:970px;top:1474px;width:1604px;height:62px;background:#dc3545;border:2px solid #da2a3a;border-radius:8px"></div>
<div class="a" style="left:2554px;top:1476px;width:18px;height:58px;background:#fff;border-radius:5px"></div>
<div class="t f28" style="left:972px;top:1490px;width:1584px;text-align:center;color:#fff">Ja</div>
<!-- hr -->
<div class="a" style="left:158px;top:1567.5px;width:2416px;height:2px;background:#e3e3e3"></div>
<!-- select -->
<div class="a" style="left:970px;top:1602px;width:1604px;height:61px;background:#fff;border:2px solid #ced4da;border-radius:8px"></div>
<div class="t f24" style="left:982px;top:1622px;color:#495057">Ioniq-5</div>
<!-- button group -->
<div class="a" style="left:970px;top:1686px;width:385px;height:75px;border:2px solid #dc3545;border-radius:8px 0 0 8px;background:#fff"></div>
<div class="a" style="left:1353px;top:1686px;width:257px;height:75px;border:2px solid #28a745;background:#fff"></div>
<div class="a" style="left:1608px;top:1686px;width:349px;height:75px;border:2px solid #007bff;background:#fff"></div>
<div class="a" style="left:1955px;top:1686px;width:337px;height:75px;border:2px solid #6c757d;background:#fff"></div>
<div class="a" style="left:2290px;top:1686px;width:284px;height:75px;border:2px solid #343a40;border-radius:0 8px 8px 0;background:#343a40"></div>
<div class="t f32" style="left:970px;top:1709px;width:384px;text-align:center;color:#dc3545">Sofortladen</div>
<div class="t f32" style="left:1353px;top:1709px;width:256px;text-align:center;color:#28a745">PV</div>
<div class="t f32" style="left:1608px;top:1709px;width:348px;text-align:center;color:#007bff">Zielladen</div>
<div class="t f32" style="left:1955px;top:1709px;width:336px;text-align:center;color:#6c757d">Standby</div>
<div class="t f32" style="left:2290px;top:1709px;width:284px;text-align:center;color:#fff">Stop</div>
<!-- toggle Nein 1 -->
<div class="a" style="left:970px;top:1770px;width:1604px;height:62px;background:#dc3545;border:2px solid #da2a3a;border-radius:8px"></div>
<div class="a" style="left:972px;top:1772px;width:18px;height:58px;background:#fff;border-radius:5px"></div>
<div class="t f28" style="left:988px;top:1787px;width:1584px;text-align:center;color:#fff">Nein</div>
<!-- toggle Nein 2 -->
<div class="a" style="left:970px;top:1840px;width:1604px;height:62px;background:#dc3545;border:2px solid #da2a3a;border-radius:8px"></div>
<div class="a" style="left:972px;top:1842px;width:18px;height:58px;background:#fff;border-radius:5px"></div>
<div class="t f28" style="left:988px;top:1857px;width:1584px;text-align:center;color:#fff">Nein</div>
<!-- icons -->
<svg class="a" style="left:0;top:1350px" width="2732" height="560" viewBox="0 1350 2732 560">
 <circle cx="215.4" cy="1415.8" r="15.3" fill="#0c5460"/>
 <circle cx="215.4" cy="1409.9" r="2.6" fill="#d1ecf1"/>
 <path d="M212 1414.3h5.1v7h1.8v2.8h-7v-2.8h1.7v-4.3h-1.6z" fill="#d1ecf1"/>
 <rect x="157.5" y="1496.2" width="27.9" height="17.4" rx="3" fill="#505050"/>
 <path d="M164.45 1497 V1491.3 A7.05 7.05 0 0 1 178.55 1491.3 V1497" fill="none" stroke="#505050" stroke-width="4.5"/>
 <path d="M157.5 1647.7 V1639.5 Q157.5 1637.2 160.7 1636.1 L163.9 1628.8 Q164.8 1626.2 167.4 1626.2 H181 Q182.3 1626.2 183.2 1627.4 L190.1 1636.1 H192.3 Q197.3 1636.6 197.3 1641.8 V1647.7 Z" fill="#505050"/>
 <path d="M167 1630 H172.2 V1636.1 H164.8 Z M174.9 1630 H180.8 L185.3 1636.1 H174.9 Z" fill="#fff"/>
 <circle cx="167.4" cy="1647.9" r="4.2" fill="#fff" stroke="#505050" stroke-width="2.3"/>
 <circle cx="187.4" cy="1647.9" r="4.2" fill="#fff" stroke="#505050" stroke-width="2.3"/>
 <path d="M175.5 1778 L181.1 1787.4 L192 1789.9 L185.1 1798.6 L185.5 1809.4 L175.5 1805.5 L165.2 1809.4 L166.3 1798.6 L159 1789.9 L169.9 1787.4 Z" fill="#505050" stroke="#505050" stroke-width="1.5" stroke-linejoin="round"/>
 <circle cx="173.5" cy="1863.7" r="13.8" fill="none" stroke="#505050" stroke-width="2.8"/>
 <path d="M173.5 1855 V1865.2 L178.6 1868.8" fill="none" stroke="#505050" stroke-width="3"/>
 <path d="M2548.5 1632 L2554.8 1625.8 L2561 1632 M2548.5 1634.8 L2554.8 1641 L2561 1634.8" fill="none" stroke="#343a40" stroke-width="2.4"/>
</svg>

<!-- DETAILS_END -->

<!-- home indicator -->
<div class="a" style="left:1021px;top:2022px;width:690px;height:11px;border-radius:6px;background:#000"></div>
</body></html>
